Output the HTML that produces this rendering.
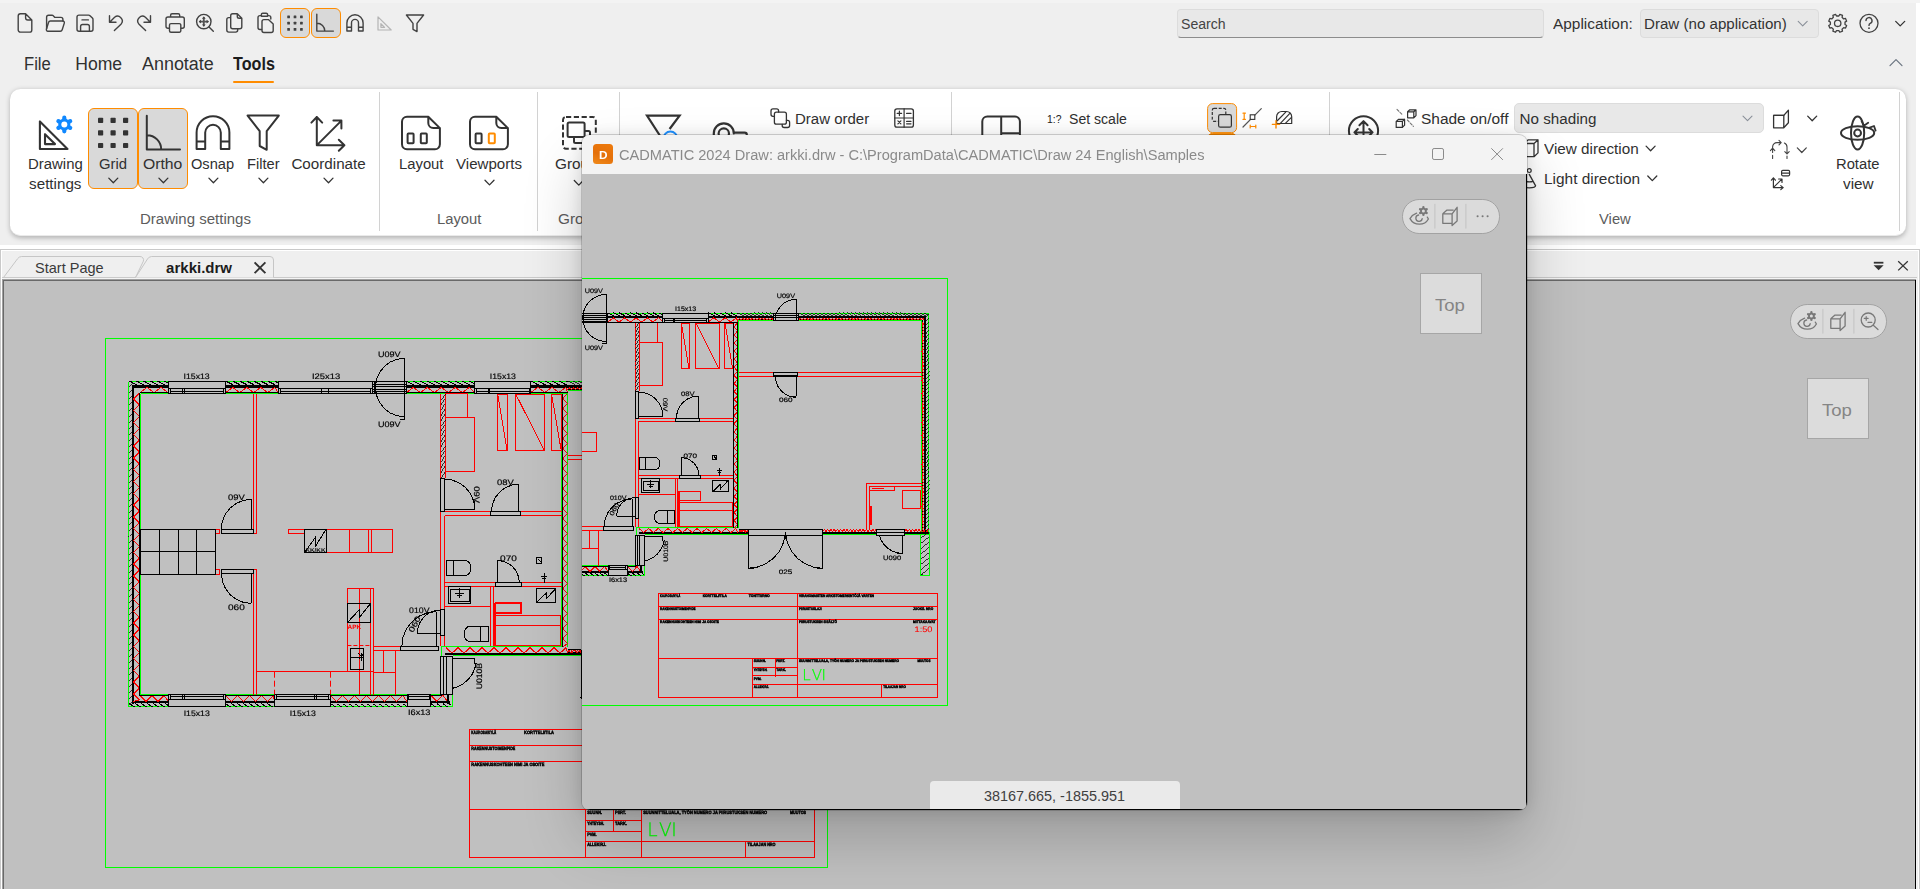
<!DOCTYPE html><html lang="en"><head><meta charset="utf-8"><title>CADMATIC 2024 Draw: arkki.drw</title><style>
*{box-sizing:border-box}
html,body{margin:0;padding:0}
body{width:1920px;height:889px;overflow:hidden;background:#efefef;font-family:"Liberation Sans",sans-serif;position:relative}
#app{position:absolute;left:0;top:0;width:1920px;height:889px;overflow:hidden;background:#efefef}
.a{position:absolute}
.t{position:absolute;white-space:nowrap;transform-origin:0 50%;display:block}
.box{position:absolute;background:#e8e8e8;border:1px solid #dcdcdc;border-radius:5px}
.act{position:absolute;background:#d9d9d9;border:1px solid #ff8c00;border-radius:6px}
.sep{position:absolute;width:1px;background:#d2d2d2;top:92px;height:139px}
.ribbon{position:absolute;left:9.9px;top:88.6px;width:1896px;height:147.5px;background:#fff;border-radius:10.5px;border-bottom:1px solid #eaeaea;box-shadow:0 1.6px 5px rgba(0,0,0,.26)}
svg{position:absolute;left:0;top:0;overflow:hidden}
.cad{will-change:transform}
.canvas{position:absolute;left:4px;top:281px;width:1911px;height:608px;background:#c0c0c0;overflow:hidden}
.fwin{position:absolute;left:582px;top:135px;width:945px;height:675px;border-radius:8px;background:#c0c0c0;box-shadow:0 0 0 1px rgba(0,0,0,.17),0 2px 18px rgba(0,0,0,.13),0 30px 60px rgba(0,0,0,.2);overflow:hidden}
.ftitle{position:absolute;left:0;top:0;width:945px;height:39px;background:#f3f3f3}
.fbody{position:absolute;left:0;top:39px;width:944px;height:635px;background:#c0c0c0;overflow:hidden}
.pill{position:absolute;width:97.4px;height:34.4px;border-radius:17.2px;background:rgba(236,236,236,.62);border:1px solid #a2a2a2}
.topbox{position:absolute;width:61.5px;height:61.3px;background:#dcdcdc;border:1px solid #a6a6a6}
</style></head><body><div id="app"><div class="a" style="left:0;top:0;width:1920px;height:3px;background:#f3f3f3"></div><div class="a" style="left:1916px;top:3px;width:4px;height:246px;background:#fff"></div><div class="a" style="left:0;top:245px;width:1920px;height:4px;background:#fff"></div><div class="act" style="left:280px;top:8px;width:30px;height:30px"></div><div class="act" style="left:310.5px;top:8px;width:30px;height:30px"></div><div class="box" style="left:1176.5px;top:8.5px;width:367px;height:29px;border-bottom-color:#8c8c8c;border-radius:4px"></div><span class="t" style="left:1180.82px;top:14.03px;font-size:15.2px;line-height:19px;color:#444;transform:scaleX(0.9284);">Search</span><span class="t" style="left:1552.62px;top:14.03px;font-size:15.2px;line-height:19px;color:#333;transform:scaleX(1.0157);">Application:</span><div class="box" style="left:1639.5px;top:8.5px;width:179px;height:29px;border-radius:4px"></div><span class="t" style="left:1644.32px;top:14.03px;font-size:15.2px;line-height:19px;color:#333;transform:scaleX(0.9951);">Draw (no application)</span><span class="t" style="left:23.81px;top:52.90px;font-size:17.6px;line-height:22px;color:#303030;transform:scaleX(0.9453);">File</span><span class="t" style="left:75.21px;top:52.90px;font-size:17.6px;line-height:22px;color:#303030;">Home</span><span class="t" style="left:141.81px;top:52.90px;font-size:17.6px;line-height:22px;color:#303030;transform:scaleX(1.0191);">Annotate</span><span class="t" style="left:232.71px;top:52.90px;font-size:17.6px;line-height:22px;color:#1c1c1c;font-weight:bold;transform:scaleX(0.9185);">Tools</span><div class="a" style="left:233px;top:80.6px;width:41px;height:2.6px;border-radius:1.3px;background:#ff8c00"></div><div class="ribbon"></div><div class="sep" style="left:379.0px"></div><div class="sep" style="left:537.0px"></div><div class="sep" style="left:619.0px"></div><div class="sep" style="left:951.0px"></div><div class="sep" style="left:1329.0px"></div><div class="sep" style="left:1899.0px"></div><div class="act" style="left:88.3px;top:108px;width:49.4px;height:81px;border-radius:6px"></div><div class="act" style="left:138.3px;top:108px;width:49.4px;height:81px;border-radius:6px"></div><span class="t" style="left:28.02px;top:153.83px;font-size:15.2px;line-height:19px;color:#303030;transform:scaleX(0.9831);">Drawing</span><span class="t" style="left:29.12px;top:173.83px;font-size:15.2px;line-height:19px;color:#303030;">settings</span><span class="t" style="left:98.72px;top:153.83px;font-size:15.2px;line-height:19px;color:#303030;transform:scaleX(0.9791);">Grid</span><span class="t" style="left:143.22px;top:153.83px;font-size:15.2px;line-height:19px;color:#303030;transform:scaleX(1.0368);">Ortho</span><span class="t" style="left:191.42px;top:153.83px;font-size:15.2px;line-height:19px;color:#303030;transform:scaleX(0.9628);">Osnap</span><span class="t" style="left:246.92px;top:153.83px;font-size:15.2px;line-height:19px;color:#303030;transform:scaleX(0.9656);">Filter</span><span class="t" style="left:291.42px;top:153.83px;font-size:15.2px;line-height:19px;color:#303030;">Coordinate</span><span class="t" style="left:399.02px;top:153.83px;font-size:15.2px;line-height:19px;color:#303030;transform:scaleX(0.9754);">Layout</span><span class="t" style="left:456.02px;top:153.83px;font-size:15.2px;line-height:19px;color:#303030;transform:scaleX(0.9932);">Viewports</span><span class="t" style="left:554.62px;top:153.83px;font-size:15.2px;line-height:19px;color:#303030;transform:scaleX(1.0111);">Group</span><span class="t" style="left:140.12px;top:209.23px;font-size:15.2px;line-height:19px;color:#5c5c5c;transform:scaleX(0.9880);">Drawing settings</span><span class="t" style="left:437.02px;top:209.23px;font-size:15.2px;line-height:19px;color:#5c5c5c;transform:scaleX(0.9732);">Layout</span><span class="t" style="left:557.62px;top:209.23px;font-size:15.2px;line-height:19px;color:#5c5c5c;transform:scaleX(1.0111);">Group</span><span class="t" style="left:795.02px;top:109.03px;font-size:15.2px;line-height:19px;color:#303030;transform:scaleX(0.9872);">Draw order</span><span class="t" style="left:1068.82px;top:109.03px;font-size:15.2px;line-height:19px;color:#303030;transform:scaleX(0.9263);">Set scale</span><span class="t" style="left:1046.55px;top:113.73px;font-size:10px;line-height:12px;color:#222;transform:scaleX(1.0359);">1:?</span><span class="t" style="left:1420.52px;top:109.33px;font-size:15.2px;line-height:19px;color:#303030;transform:scaleX(1.0184);">Shade on/off</span><div class="box" style="left:1514.3px;top:103.2px;width:249.4px;height:29.4px;border-radius:5px"></div><span class="t" style="left:1519.62px;top:109.33px;font-size:15.2px;line-height:19px;color:#303030;">No shading</span><span class="t" style="left:1543.72px;top:139.03px;font-size:15.2px;line-height:19px;color:#303030;transform:scaleX(1.0049);">View direction</span><span class="t" style="left:1543.72px;top:168.93px;font-size:15.2px;line-height:19px;color:#303030;transform:scaleX(1.0156);">Light direction</span><span class="t" style="left:1599.12px;top:208.83px;font-size:15.2px;line-height:19px;color:#5c5c5c;transform:scaleX(0.9738);">View</span><span class="t" style="left:1836.42px;top:154.03px;font-size:15.2px;line-height:19px;color:#303030;transform:scaleX(0.9717);">Rotate</span><span class="t" style="left:1842.82px;top:173.83px;font-size:15.2px;line-height:19px;color:#303030;transform:scaleX(1.0068);">view</span><svg width="1920" height="250" viewBox="0 0 1920 250"><path d="M20.4 13.8h5.2l6.2 6.2v9.9a2.2 2.2 0 0 1-2.2 2.2h-9.2a2.2 2.2 0 0 1-2.2-2.2V16a2.2 2.2 0 0 1 2.2-2.2zM25.6 13.8v4a2.2 2.2 0 0 0 2.2 2.2h4" fill="none" stroke="#424242" stroke-width="1.4" stroke-linecap="round" stroke-linejoin="round" /><path d="M46.6 28.6V17.2a2 2 0 0 1 2-2h3.4a2 2 0 0 1 1.5.7l1.4 1.5h6a2 2 0 0 1 2 2v1.6" fill="none" stroke="#424242" stroke-width="1.4" stroke-linecap="round" stroke-linejoin="round" /><path d="M50.4 21h12.4a1.6 1.6 0 0 1 1.5 2.1l-2.1 6.6a2.2 2.2 0 0 1-2 1.5H47.8a1.5 1.5 0 0 1-1.4-1.9l2.1-6.8a2 2 0 0 1 1.9-1.5z" fill="none" stroke="#424242" stroke-width="1.4" stroke-linecap="round" stroke-linejoin="round" /><path d="M79 15.1h9.6a2 2 0 0 1 1.4.6l2.4 2.4a2 2 0 0 1 .6 1.4v9.7a2 2 0 0 1-2 2H79a2 2 0 0 1-2-2V17.1a2 2 0 0 1 2-2zM82 19.9h6.4M80.6 31.1v-4.6a2 2 0 0 1 2-2h4.8a2 2 0 0 1 2 2v4.6" fill="none" stroke="#424242" stroke-width="1.4" stroke-linecap="round" stroke-linejoin="round" /><path d="M109.5 15.8v6.5h6.5M109.9 21.9l4.7-4.6a4.7 4.7 0 0 1 6.6 6.6l-6.8 6.5" fill="none" stroke="#424242" stroke-width="1.4" stroke-linecap="round" stroke-linejoin="round" /><path d="M150.5 15.8v6.5h-6.5M150.1 21.9l-4.7-4.6a4.7 4.7 0 0 0-6.6 6.6l6.8 6.5" fill="none" stroke="#424242" stroke-width="1.4" stroke-linecap="round" stroke-linejoin="round" /><path d="M170.6 17v-1.8a1.5 1.5 0 0 1 1.5-1.5h6.1a1.5 1.5 0 0 1 1.5 1.5V17M169.6 28.3h-1.6a2 2 0 0 1-2-2V19a2 2 0 0 1 2-2h14.3a2 2 0 0 1 2 2v7.3a2 2 0 0 1-2 2h-1.6M171 23.6h8.3a1.5 1.5 0 0 1 1.5 1.5v5.7a1.5 1.5 0 0 1-1.5 1.5H171a1.5 1.5 0 0 1-1.5-1.5v-5.7a1.5 1.5 0 0 1 1.5-1.5z" fill="none" stroke="#424242" stroke-width="1.4" stroke-linecap="round" stroke-linejoin="round" /><circle cx="203.8" cy="21.6" r="7.2" fill="none" stroke="#424242" stroke-width="1.4"/><path d="M209 26.9l4.3 4.3" fill="none" stroke="#424242" stroke-width="1.4" stroke-linecap="round" stroke-linejoin="round" /><path d="M203.8 17.6v8M199.8 21.6h8" fill="none" stroke="#555" stroke-width="1.8" stroke-linecap="round" stroke-linejoin="round" /><path d="M203.8 16.6l1.9 2.2h-3.8zM203.8 26.6l1.9-2.2h-3.8zM198.8 21.6l2.2-1.9v3.8zM208.8 21.6l-2.2-1.9v3.8z" fill="#444"/><path d="M229.8 17.6h-1a2 2 0 0 0-2 2v10.5a2 2 0 0 0 2 2h6.9a2 2 0 0 0 2-2v-1.2" fill="none" stroke="#424242" stroke-width="1.4" stroke-linecap="round" stroke-linejoin="round" /><path d="M232.7 13.8h4.6l4.5 4.5v8.4a2 2 0 0 1-2 2h-7.1a2 2 0 0 1-2-2V15.8a2 2 0 0 1 2-2zM237.3 13.8v2.7a1.8 1.8 0 0 0 1.8 1.8h2.7" fill="none" stroke="#424242" stroke-width="1.4" stroke-linecap="round" stroke-linejoin="round" /><path d="M261.2 15.6h-1.2a2 2 0 0 0-2 2v9.9a2 2 0 0 0 2 2h1.6M267.6 15.6h1.2a2 2 0 0 1 2 2v1.4M261.4 16.2v-1.6a1.4 1.4 0 0 1 1.4-1.4h3.4a1.4 1.4 0 0 1 1.4 1.4v1.6z" fill="none" stroke="#424242" stroke-width="1.4" stroke-linecap="round" stroke-linejoin="round" /><path d="M264 19.6h4.4l4.8 4.4v6.5a2 2 0 0 1-2 2H264a2 2 0 0 1-2-2v-8.9a2 2 0 0 1 2-2z" fill="none" stroke="#424242" stroke-width="1.4" stroke-linecap="round" stroke-linejoin="round" /><rect x="287.25" y="15.55" width="2.7" height="2.7" rx="0.5" fill="#424242"/><rect x="287.25" y="21.75" width="2.7" height="2.7" rx="0.5" fill="#424242"/><rect x="287.25" y="27.95" width="2.7" height="2.7" rx="0.5" fill="#424242"/><rect x="293.65" y="15.55" width="2.7" height="2.7" rx="0.5" fill="#424242"/><rect x="293.65" y="21.75" width="2.7" height="2.7" rx="0.5" fill="#424242"/><rect x="293.65" y="27.95" width="2.7" height="2.7" rx="0.5" fill="#424242"/><rect x="300.05" y="15.55" width="2.7" height="2.7" rx="0.5" fill="#424242"/><rect x="300.05" y="21.75" width="2.7" height="2.7" rx="0.5" fill="#424242"/><rect x="300.05" y="27.95" width="2.7" height="2.7" rx="0.5" fill="#424242"/><path d="M316.8 14.3V31.1h16.6M317 23.2a7.8 7.8 0 0 1 7.8 7.8" fill="none" stroke="#424242" stroke-width="1.4" stroke-linecap="round" stroke-linejoin="round" /><path d="M346.9 31V22.9a8.1 8.1 0 0 1 16.2 0V31h-4.6V22.9a3.5 3.5 0 0 0-7 0V31zM346.9 27.3h4.6M358.5 27.3h4.6" fill="none" stroke="#424242" stroke-width="1.4" stroke-linecap="round" stroke-linejoin="round" /><path d="M378 16.8V30h13.2zM380.9 23.6v3.7h3.7z" fill="none" stroke="#b4b4b4" stroke-width="1.2" stroke-linecap="round" stroke-linejoin="round" /><path d="M406.4 15h17.2l-6.6 8.4v8.2l-4-2.3v-5.9z" fill="none" stroke="#424242" stroke-width="1.4" stroke-linecap="round" stroke-linejoin="round" /><path d="M1846.65 25.45L1845.54 28.11L1843.69 27.65L1842.05 29.29L1842.51 31.14L1839.85 32.25L1838.86 30.61L1836.54 30.61L1835.55 32.25L1832.89 31.14L1833.35 29.29L1831.71 27.65L1829.86 28.11L1828.75 25.45L1830.39 24.46L1830.39 22.14L1828.75 21.15L1829.86 18.49L1831.71 18.95L1833.35 17.31L1832.89 15.46L1835.55 14.35L1836.54 15.99L1838.86 15.99L1839.85 14.35L1842.51 15.46L1842.05 17.31L1843.69 18.95L1845.54 18.49L1846.65 21.15L1845.01 22.14L1845.01 24.46Z" fill="none" stroke="#424242" stroke-width="1.3" stroke-linejoin="round"/><circle cx="1837.7" cy="23.3" r="3.2" fill="none" stroke="#424242" stroke-width="1.3"/><circle cx="1869" cy="23.3" r="9" fill="none" stroke="#424242" stroke-width="1.3"/><path d="M1866 20.6a3 3 0 1 1 4.3 2.7c-1 .5-1.3 1.1-1.3 2.1" fill="none" stroke="#424242" stroke-width="1.4" stroke-linecap="round" stroke-linejoin="round" /><circle cx="1869" cy="28.2" r="0.9" fill="#424242"/><path d="M1895.70 21.35L1900.20 25.85L1904.70 21.35" fill="none" stroke="#333" stroke-width="1.3" stroke-linecap="round" stroke-linejoin="round"/><path d="M1798.20 21.35L1802.70 25.85L1807.20 21.35" fill="none" stroke="#8a9099" stroke-width="1.1" stroke-linecap="round" stroke-linejoin="round"/><path d="M1890.00 65.60L1896.00 59.60L1902.00 65.60" fill="none" stroke="#6a7480" stroke-width="1.2" stroke-linecap="round" stroke-linejoin="round"/><path d="M39.9 121.4V149h27.6zM45 134.2v9.9h10z" fill="none" stroke="#333" stroke-width="2.1" stroke-linecap="round" stroke-linejoin="round" /><path d="M64.30 124.50L64.30 117.70M64.30 124.50L58.41 121.10M64.30 124.50L58.41 127.90M64.30 124.50L64.30 131.30M64.30 124.50L70.19 127.90M64.30 124.50L70.19 121.10" stroke="#1088ff" stroke-width="4.2" stroke-linecap="round" fill="none"/><circle cx="64.3" cy="124.5" r="6.0" fill="#1088ff"/><circle cx="64.3" cy="124.5" r="3.0" fill="#fff"/><rect x="98.00" y="117.80" width="5.2" height="5.2" rx="0.8" fill="#333"/><rect x="98.00" y="130.30" width="5.2" height="5.2" rx="0.8" fill="#333"/><rect x="98.00" y="142.90" width="5.2" height="5.2" rx="0.8" fill="#333"/><rect x="110.50" y="117.80" width="5.2" height="5.2" rx="0.8" fill="#333"/><rect x="110.50" y="130.30" width="5.2" height="5.2" rx="0.8" fill="#333"/><rect x="110.50" y="142.90" width="5.2" height="5.2" rx="0.8" fill="#333"/><rect x="123.00" y="117.80" width="5.2" height="5.2" rx="0.8" fill="#333"/><rect x="123.00" y="130.30" width="5.2" height="5.2" rx="0.8" fill="#333"/><rect x="123.00" y="142.90" width="5.2" height="5.2" rx="0.8" fill="#333"/><path d="M146.8 115.8V149.4H180M147 135.2a14.2 14.2 0 0 1 14.2 14.2" fill="none" stroke="#333" stroke-width="2.0" stroke-linecap="round" stroke-linejoin="round" /><path d="M196.6 149V132.6a16.4 16.4 0 0 1 32.8 0V149h-8.6V132.6a7.8 7.8 0 0 0-15.6 0V149zM196.6 141.6h8.6M220.8 141.6h8.6" fill="none" stroke="#333" stroke-width="2.0" stroke-linecap="round" stroke-linejoin="round" /><path d="M247.6 115.6h31.2l-12.1 15.6v18.6l-7-3.8v-14.8z" fill="none" stroke="#333" stroke-width="2.0" stroke-linecap="round" stroke-linejoin="round" /><path d="M316.8 117v28.3h27.6M311.4 122.6l5.4-5.6 5.4 5.6M338.8 139.8l5.6 5.5-5.6 5.5M317.2 144.9l24-24M333.4 120.6h8v8" fill="none" stroke="#333" stroke-width="2.0" stroke-linecap="round" stroke-linejoin="round" /><path d="M407 116.8h21.3l11.6 11.3v16.2a5 5 0 0 1-5 5h-27.9a5 5 0 0 1-5-5V121.8a5 5 0 0 1 5-5zM428.3 116.8v6.3a5 5 0 0 0 5 5h6.6" fill="none" stroke="#333" stroke-width="2.0" stroke-linecap="round" stroke-linejoin="round" /><rect x="407.6" y="133.6" width="6" height="9.6" rx="0.8" fill="none" stroke="#333" stroke-width="2.0"/><rect x="420.8" y="133.6" width="6" height="9.6" rx="0.8" fill="none" stroke="#333" stroke-width="2.0"/><path d="M475 116.8h21.3l11.6 11.3v16.2a5 5 0 0 1-5 5h-27.9a5 5 0 0 1-5-5V121.8a5 5 0 0 1 5-5zM496.3 116.8v6.3a5 5 0 0 0 5 5h6.6" fill="none" stroke="#333" stroke-width="2.0" stroke-linecap="round" stroke-linejoin="round" /><rect x="475.6" y="133.6" width="6" height="9.6" rx="0.8" fill="none" stroke="#333" stroke-width="2.0"/><rect x="488.8" y="133.6" width="6" height="9.6" rx="0.8" fill="none" stroke="#ff8c00" stroke-width="2.0"/><rect x="563" y="116.9" width="32.8" height="31.8" rx="3" fill="none" stroke="#333" stroke-width="2.0" stroke-dasharray="5.2 2.6"/><rect x="574" y="131" width="16" height="12" rx="1.5" fill="none" stroke="#333" stroke-width="2.0"/><rect x="567.6" y="122.6" width="17" height="14.4" rx="1.5" fill="#fff" stroke="#333" stroke-width="2.0"/><path d="M660.8 137L647 115.6h32.6L669.6 129" fill="none" stroke="#333" stroke-width="2.2" stroke-linecap="butt" stroke-linejoin="miter" /><circle cx="670.4" cy="138.6" r="7" fill="none" stroke="#1e90ff" stroke-width="2"/><path d="M713.8 138V133.4a10 10 0 0 1 20 0M733.6 132.6h11a2.2 2.2 0 0 1 2.2 2.2V138" fill="none" stroke="#333" stroke-width="2.2" stroke-linecap="round" stroke-linejoin="round" /><circle cx="723.8" cy="133.6" r="5.2" fill="none" stroke="#333" stroke-width="2.2"/><path d="M774.2 116.3h-1.2a2 2 0 0 1-2-2v-3.4a2 2 0 0 1 2-2h3.6a2 2 0 0 1 2 2v1.2" fill="none" stroke="#333" stroke-width="1.3" stroke-linecap="round" stroke-linejoin="round" /><path d="M786.4 120.3h1.2a2 2 0 0 1 2 2v3.2a2 2 0 0 1-2 2h-3.4a2 2 0 0 1-2-2v-1" fill="none" stroke="#333" stroke-width="1.3" stroke-linecap="round" stroke-linejoin="round" /><rect x="774.4" y="112.2" width="12" height="12" rx="2" fill="none" stroke="#333" stroke-width="1.3"/><rect x="894.8" y="108.8" width="18.6" height="18.4" rx="2.2" fill="none" stroke="#333" stroke-width="1.3"/><path d="M904.1 108.8v18.4M894.8 118h18.6M897.2 113.4h4.4M899.4 111.2v4.4M906.6 113.4h4.4M897.9 120.9l3 3M900.9 120.9l-3 3M906.6 121.4h4.4M906.6 123.8h4.4" fill="none" stroke="#333" stroke-width="1.2" stroke-linecap="round" stroke-linejoin="round" /><path d="M982.3 136V121.6a5 5 0 0 1 5-5h27.6a5 5 0 0 1 5 5V136M1001.2 116.6V136M1001.2 133.2h18.7" fill="none" stroke="#333" stroke-width="2.0" stroke-linecap="round" stroke-linejoin="round" /><rect x="1207.6" y="103.6" width="29" height="29" rx="5" fill="#d9d9d9" stroke="#ff8c00" stroke-width="1"/><rect x="1207.6" y="133.4" width="29" height="10" rx="5" fill="#ff8c00" stroke="#ff8c00" stroke-width="1"/><rect x="1212.3" y="108.4" width="13.5" height="13" rx="1.8" fill="none" stroke="#333" stroke-width="1.2" stroke-dasharray="3 1.6"/><rect x="1218.6" y="114.6" width="12.8" height="12.6" rx="1.8" fill="#d9d9d9" stroke="#333" stroke-width="1.2"/><path d="M1243 127l18.3-18.3" fill="none" stroke="#555" stroke-width="1.2" stroke-linecap="round" stroke-linejoin="round" /><rect x="1250.2" y="114.8" width="4.6" height="4.6" fill="#fff" stroke="#333" stroke-width="1.1"/><path d="M1243 113.2h2.4M1243 119.4h2.4M1244.2 113.2v6.2M1250.2 125v3M1255.8 125v3M1250.2 126.5h5.6" fill="none" stroke="#ff8c00" stroke-width="1.2" stroke-linecap="round" stroke-linejoin="round" /><path d="M1276.6 123.5v-6.8a5.2 5.2 0 0 1 5.2-5.2h4.7a5.2 5.2 0 0 1 5.2 5.2v6.8z" fill="none" stroke="#333" stroke-width="1.2" stroke-linecap="round" stroke-linejoin="round" /><path d="M1277.5 120.5l8.2-8.4M1280.6 123.2l9-9.6M1285.6 123.2l5.6-5.6" fill="none" stroke="#333" stroke-width="1.2" stroke-linecap="round" stroke-linejoin="round" /><path d="M1272.4 124.4h7.2M1276 120.8v7.2" fill="none" stroke="#ff8c00" stroke-width="1.4" stroke-linecap="round" stroke-linejoin="round" /><circle cx="1363.5" cy="130.8" r="14.6" fill="none" stroke="#333" stroke-width="2"/><path d="M1363.5 121.4v14M1359.4 125.2l4.1-4.1 4.1 4.1M1354.6 132.4h17.8M1357.8 129l-3.4 3.4 3.4 3.4M1369.2 129l3.4 3.4-3.4 3.4" fill="none" stroke="#333" stroke-width="2.0" stroke-linecap="round" stroke-linejoin="round" /><path d="M1407.6 111.8l2.2-2h6.2v5.8l-2.2 2.2h-6.2zM1407.6 111.8h6.2v6M1413.8 111.8l2.2-2" fill="none" stroke="#333" stroke-width="1.2" stroke-linecap="round" stroke-linejoin="round" /><path d="M1396.2 121.4l2.2-2h6.2v5.8l-2.2 2.2h-6.2zM1396.2 121.4h6.2v6M1402.4 121.4l2.2-2" fill="none" stroke="#333" stroke-width="1.2" stroke-linecap="round" stroke-linejoin="round" /><path d="M1397 109.4l5.6 5.6M1407.4 120l6 6.4" fill="none" stroke="#777" stroke-width="1.1" stroke-linecap="round" stroke-linejoin="round" stroke-dasharray="2.6 1.6"/><path d="M1524 143.5l4-3.6h10v13l-4 3.8h-10zM1524 143.5h10v13.2M1534 143.5l4-3.6" fill="none" stroke="#333" stroke-width="1.3" stroke-linecap="round" stroke-linejoin="round" /><path d="M1529.3 174.4l6.2 11.2M1523 185.6a6.3 2.3 0 0 0 12.6 0M1525.6 181.4a6 2 0 0 0 7.6 0" fill="none" stroke="#333" stroke-width="1.3" stroke-linecap="round" stroke-linejoin="round" /><circle cx="1529.3" cy="170.6" r="1.9" fill="none" stroke="#333" stroke-width="1.2"/><path d="M1773.6 115.4l0 12.4h10.2v-12.4zM1783.8 115.4l4.6-5.2v12.6l-4.6 5" fill="none" stroke="#333" stroke-width="1.3" stroke-linecap="round" stroke-linejoin="round" /><path d="M1773.6 115.4h10.2" fill="none" stroke="#333" stroke-width="1.3" stroke-linecap="round" stroke-linejoin="round" /><path d="M1772.6 158.4v-3M1772.6 152.4v-5.4a4.4 4.4 0 0 1 4.4-4.4h3.4M1779 140.4l2.2 2.2-2.2 2.2M1770.4 150.6l2.2-2.4 2.2 2.4" fill="none" stroke="#444" stroke-width="1.1" stroke-linecap="round" stroke-linejoin="round" /><path d="M1787 158.4v-2.4M1787 153.6v-6.6a4.4 4.4 0 0 0-2.6-4M1784.8 151.6l2.2 2.4 2.2-2.4" fill="none" stroke="#444" stroke-width="1.1" stroke-linecap="round" stroke-linejoin="round" /><path d="M1773.4 178v9.6h9.6M1771.4 180.2l2-2.4 2 2.4M1780.8 185.6l2.4 2-2.4 2M1773.8 187.2l8-8M1778.6 179h3.4v3.4" fill="none" stroke="#333" stroke-width="1.2" stroke-linecap="round" stroke-linejoin="round" /><rect x="1781.6" y="170.4" width="8" height="5.4" rx="1.2" fill="none" stroke="#333" stroke-width="1.2"/><path d="M1781.6 173.1h8" fill="none" stroke="#333" stroke-width="1.1" stroke-linecap="round" stroke-linejoin="round" /><ellipse cx="1857.6" cy="133" rx="6.6" ry="16.6" fill="none" stroke="#333" stroke-width="2"/><ellipse cx="1857.6" cy="133" rx="16.6" ry="6.8" fill="none" stroke="#333" stroke-width="2"/><circle cx="1857.6" cy="133" r="3.4" fill="#fff" stroke="#333" stroke-width="2"/><path d="M1861.6 121.4l2.6 4.2 4-2.8M1869.6 127.6l4.4-1.6 1.6 4.6" fill="none" stroke="#333" stroke-width="1.8" stroke-linecap="round" stroke-linejoin="round" /><path d="M108.80 178.10L113.30 182.70L117.80 178.10" fill="none" stroke="#333" stroke-width="1.3" stroke-linecap="round" stroke-linejoin="round"/><path d="M158.90 178.10L163.40 182.70L167.90 178.10" fill="none" stroke="#333" stroke-width="1.3" stroke-linecap="round" stroke-linejoin="round"/><path d="M208.90 178.10L213.40 182.70L217.90 178.10" fill="none" stroke="#333" stroke-width="1.3" stroke-linecap="round" stroke-linejoin="round"/><path d="M258.90 178.10L263.40 182.70L267.90 178.10" fill="none" stroke="#333" stroke-width="1.3" stroke-linecap="round" stroke-linejoin="round"/><path d="M324.00 178.10L328.50 182.70L333.00 178.10" fill="none" stroke="#333" stroke-width="1.3" stroke-linecap="round" stroke-linejoin="round"/><path d="M485.00 180.30L489.50 184.90L494.00 180.30" fill="none" stroke="#333" stroke-width="1.3" stroke-linecap="round" stroke-linejoin="round"/><path d="M574.30 180.50L578.80 185.10L583.30 180.50" fill="none" stroke="#333" stroke-width="1.3" stroke-linecap="round" stroke-linejoin="round"/><path d="M1743.00 116.10L1747.50 120.70L1752.00 116.10" fill="none" stroke="#8a9099" stroke-width="1.1" stroke-linecap="round" stroke-linejoin="round"/><path d="M1807.70 116.10L1812.20 120.70L1816.70 116.10" fill="none" stroke="#333" stroke-width="1.3" stroke-linecap="round" stroke-linejoin="round"/><path d="M1797.30 147.90L1801.80 152.50L1806.30 147.90" fill="none" stroke="#444" stroke-width="1.2" stroke-linecap="round" stroke-linejoin="round"/><path d="M1646.10 146.10L1650.60 150.70L1655.10 146.10" fill="none" stroke="#333" stroke-width="1.3" stroke-linecap="round" stroke-linejoin="round"/><path d="M1647.80 176.00L1652.30 180.60L1656.80 176.00" fill="none" stroke="#333" stroke-width="1.3" stroke-linecap="round" stroke-linejoin="round"/></svg><div class="a" style="left:0;top:249px;width:1920px;height:640px;background:#efefef;border-left:1px solid #c9c9c9;border-right:1px solid #c9c9c9;border-top:1px solid #c9c9c9"></div><div class="a" style="left:1px;top:250px;width:1918px;height:639px;border-left:1px solid #fff;border-right:1px solid #fff;border-top:1px solid #fff"></div><div class="a" style="left:2px;top:277px;width:1915px;height:1px;background:#cacaca"></div><div class="a" style="left:2px;top:278px;width:1915px;height:1px;background:#f4f4f4"></div><div class="a" style="left:2px;top:279px;width:1914px;height:610px;background:#a0a0a0"></div><div class="a" style="left:3px;top:280px;width:1913px;height:609px;background:#696969"></div><div class="a" style="left:1915px;top:280px;width:1px;height:609px;background:#000"></div><div class="a" style="left:1916px;top:279px;width:1px;height:610px;background:#f4f4f4"></div><svg width="1920" height="280" viewBox="0 0 1920 280" style="top:0"><path d="M3.5 277.5L17.5 258.8a5 5 0 0 1 4-2.3H140a3.5 3.5 0 0 1 3.4 4.6L135.5 277.5" fill="none" stroke="#c6c6c6" stroke-width="1"/><path d="M135.5 277.5L147.5 259a5 5 0 0 1 4-2.5H270a3.5 3.5 0 0 1 3.5 3.5V277.5" fill="#efefef" stroke="#c6c6c6" stroke-width="1"/><path d="M254.6 262.4l10.8 10.8M265.4 262.4l-10.8 10.8" stroke="#333" stroke-width="1.9" fill="none"/><path d="M1873.8 262.7h9.6" stroke="#333" stroke-width="1.8" fill="none"/><path d="M1873.6 265.2h10l-5 5z" fill="#333"/><path d="M1898.2 261.2l9.6 9.2M1907.8 261.2l-9.6 9.2" stroke="#333" stroke-width="1.3" fill="none"/></svg><span class="t" style="left:34.53px;top:258.10px;font-size:15.0px;line-height:19px;color:#3a3a3a;transform:scaleX(0.9679);">Start Page</span><span class="t" style="left:166.12px;top:258.10px;font-size:15.0px;line-height:19px;color:#1c1c1c;font-weight:bold;">arkki.drw</span><div class="canvas"><svg class="cad" width="1911" height="608" viewBox="4 281 1911 608"><g shape-rendering="crispEdges"><path d="M105.5 338.5H827.5V867.5H105.5ZM128.5 381.5L168.4 381.5M140.5 393.5L168.4 393.5M225.7 381.5L278.3 381.5M225.7 393.5L278.3 393.5M406.4 381.5L474.6 381.5M406.4 393.5L474.6 393.5M530.9 381.5L567.5 381.5M530.9 393.5L567.5 393.5M128.5 381.5L128.5 706.5M140.5 393.5L140.5 694.5M128.5 706.5L168.4 706.5M140.5 694.5L168.4 694.5M225.5 706.5L274.5 706.5M225.5 694.5L274.5 694.5M330.6 706.5L407.1 706.5M330.6 694.5L407.1 694.5M430.8 706.5L452.5 706.5M430.8 694.5L440.5 694.5M452.5 694.5L452.5 706.5M561.5 393.5L561.5 647.0M567.5 390.5L567.5 647.0M441.0 646.5L561.5 646.5M452.5 655.5L581.0 655.5M441.5 646.5L441.5 656.0M567.5 381.5L611.2 381.5M567.5 390.5L611.2 390.5M642.8 381.5L803.8 381.5M642.8 390.5L794.8 390.5M803.5 381.5L803.5 652.6M794.5 390.5L794.5 652.6M568.4 655.5L580.1 655.5M672.8 655.5L739.1 655.5M773.9 655.5L803.8 655.5M793.5 652.5H804.5V706.5H793.5Z" stroke="#00ff00" stroke-width="1" fill="none"/><path d="M567.5 389.5L611.2 389.5M642.8 389.5L795.8 389.5M795.5 389.5L795.5 652.6" stroke="#010101" stroke-width="1" fill="none"/><path d="M133.0 384.5L133.0 703.5M131.5 702.0L168.4 702.0M225.5 702.0L274.5 702.0M330.6 702.0L407.1 702.0M430.8 702.0L449.5 702.0M445.0 654.0L581.0 654.0M568.4 653.0L580.1 653.0M672.8 653.0L739.1 653.0M773.9 653.0L803.8 653.0" stroke="#010101" stroke-width="2" fill="none"/><path d="M132.0 386.5L168.4 386.5M225.7 386.5L278.3 386.5M406.4 386.5L474.6 386.5M530.9 386.5L567.5 386.5M567.5 386.5L611.2 386.5M642.8 386.5L800.3 386.5M798.5 385.0L798.5 652.6" stroke="#010101" stroke-width="3" fill="none"/><path d="M140.0 392.6L147.0 387.3L154.0 392.6L161.0 387.3L168.0 392.6L168.4 387.3M225.7 392.6L232.7 387.3L239.7 392.6L246.7 387.3L253.7 392.6L260.7 387.3L267.7 392.6L274.7 387.3L278.3 392.6M406.4 392.6L413.4 387.3L420.4 392.6L427.4 387.3L434.4 392.6L441.4 387.3L448.4 392.6L455.4 387.3L462.4 392.6L469.4 387.3L474.6 392.6M530.9 392.6L537.9 387.3L544.9 392.6L551.9 387.3L558.9 392.6L565.9 387.3L567.5 392.6M139.5 393.0L133.5 398.9L139.5 404.8L133.5 410.7L139.5 416.6L133.5 422.5L139.5 428.4L133.5 434.3L139.5 440.2L133.5 446.1L139.5 452.0L133.5 457.9L139.5 463.8L133.5 469.7L139.5 475.6L133.5 481.5L139.5 487.4L133.5 493.3L139.5 499.2L133.5 505.1L139.5 511.0L133.5 516.9L139.5 522.8L133.5 528.7L139.5 534.6L133.5 540.5L139.5 546.4L133.5 552.3L139.5 558.2L133.5 564.1L139.5 570.0L133.5 575.9L139.5 581.8L133.5 587.7L139.5 593.6L133.5 599.5L139.5 605.4L133.5 611.3L139.5 617.2L133.5 623.1L139.5 629.0L133.5 634.9L139.5 640.8L133.5 646.7L139.5 652.6L133.5 658.5L139.5 664.4L133.5 670.3L139.5 676.2L133.5 682.1L139.5 688.0L133.5 693.9L139.5 699.8L133.5 701.5M140.0 695.4L146.0 701.5L152.0 695.4L158.0 701.5L164.0 695.4L168.4 701.5M225.5 695.4L231.5 701.5L237.5 695.4L243.5 701.5L249.5 695.4L255.5 701.5L261.5 695.4L267.5 701.5L273.5 695.4L274.5 701.5M330.6 695.4L336.6 701.5L342.6 695.4L348.6 701.5L354.6 695.4L360.6 701.5L366.6 695.4L372.6 701.5L378.6 695.4L384.6 701.5L390.6 695.4L396.6 701.5L402.6 695.4L407.1 701.5M430.8 695.4L436.8 701.5L442.8 695.4L447.5 701.5M567.4 393.5L562.9 398.5L567.4 403.5L562.9 408.5L567.4 413.5L562.9 418.5L567.4 423.5L562.9 428.5L567.4 433.5L562.9 438.5L567.4 443.5L562.9 448.5L567.4 453.5L562.9 458.5L567.4 463.5L562.9 468.5L567.4 473.5L562.9 478.5L567.4 483.5L562.9 488.5L567.4 493.5L562.9 498.5L567.4 503.5L562.9 508.5L567.4 513.5L562.9 518.5L567.4 523.5L562.9 528.5L567.4 533.5L562.9 538.5L567.4 543.5L562.9 548.5L567.4 553.5L562.9 558.5L567.4 563.5L562.9 568.5L567.4 573.5L562.9 578.5L567.4 583.5L562.9 588.5L567.4 593.5L562.9 598.5L567.4 603.5L562.9 608.5L567.4 613.5L562.9 618.5L567.4 623.5L562.9 628.5L567.4 633.5L562.9 638.5L567.4 643.5L562.9 647.0M446.0 647.6L452.0 653.2L458.0 647.6L464.0 653.2L470.0 647.6L476.0 653.2L482.0 647.6L488.0 653.2L494.0 647.6L500.0 653.2L506.0 647.6L512.0 653.2L518.0 647.6L524.0 653.2L530.0 647.6L536.0 653.2L542.0 647.6L548.0 653.2L554.0 647.6L560.0 653.2L566.0 647.6L567.5 653.2M568.0 650.4L571.0 652.6L574.0 650.4L577.0 652.6L580.0 650.4L581.0 652.6M215.5 529.5H219.5V533.5H215.5ZM215.5 569.5H219.5V574.5H215.5ZM253.5 393.5L253.5 529.5M256.5 393.5L256.5 533.5M253.5 533.5L256.5 533.5M253.5 573.5L253.5 694.5M256.5 569.5L256.5 694.5M253.5 569.5L256.5 569.5M288.5 529.5H304.5V533.5H288.5ZM326.5 529.5H392.5V552.5H326.5ZM349.5 529.5L349.5 552.6M368.5 529.5L368.5 552.6M371.5 529.5L371.5 552.6M347.5 588.5H373.5V671.5H347.5ZM359.5 588.3L359.5 671.7M370.5 588.3L370.5 671.7M347.4 603.5L370.9 603.5M256.5 671.5L347.4 671.5M359.5 671.7L359.5 694.5M370.5 671.7L370.5 694.5M373.5 671.7L373.5 694.5M373.5 646.5L400.8 646.5M373.5 650.5L400.8 650.5M383.5 650.2L383.5 672.5M395.5 650.2L395.5 694.5M373.5 672.5L395.0 672.5M440.5 511.5L440.5 609.6M444.5 515.5L444.5 609.6M440.5 635.3L440.5 646.3M444.5 635.3L444.5 646.3M440.5 393.5L440.5 477.6M445.5 393.5L445.5 477.6M445.5 393.5H467.5V417.5H445.5ZM445.5 417.5H474.5V471.5H445.5ZM497.5 394.5H507.5V450.5H497.5ZM497.8 394.3L507.1 450.5M515.5 394.5H544.5V450.5H515.5ZM515.8 394.3L544.4 450.5M551.5 394.5H561.5V450.5H551.5ZM551.6 394.3L561.2 450.5M444.5 511.5L490.9 511.5M444.5 515.5L490.9 515.5M520.6 511.5L561.8 511.5M520.6 515.5L561.8 515.5M444.5 582.5L495.3 582.5M444.5 586.5L495.3 586.5M521.3 582.5L561.8 582.5M521.3 586.5L561.8 586.5M444.5 606.5L490.3 606.5M490.5 586.5L490.5 646.3M493.5 586.5L493.5 646.3M494.5 615.5H560.5V625.5H494.5ZM494.5 625.5H560.5V645.5H494.5ZM567.5 389.5L569.5 388.1L571.5 389.5L573.5 388.1L575.5 389.5L577.5 388.1L579.5 389.5L581.5 388.1L583.5 389.5L585.5 388.1L587.5 389.5L589.5 388.1L591.5 389.5L593.5 388.1L595.5 389.5L597.5 388.1L599.5 389.5L601.5 388.1L603.5 389.5L605.5 388.1L607.5 389.5L609.5 388.1L611.2 389.5M642.8 389.5L644.8 388.1L646.8 389.5L648.8 388.1L650.8 389.5L652.8 388.1L654.8 389.5L656.8 388.1L658.8 389.5L660.8 388.1L662.8 389.5L664.8 388.1L666.8 389.5L668.8 388.1L670.8 389.5L672.8 388.1L674.8 389.5L676.8 388.1L678.8 389.5L680.8 388.1L682.8 389.5L684.8 388.1L686.8 389.5L688.8 388.1L690.8 389.5L692.8 388.1L694.8 389.5L696.8 388.1L698.8 389.5L700.8 388.1L702.8 389.5L704.8 388.1L706.8 389.5L708.8 388.1L710.8 389.5L712.8 388.1L714.8 389.5L716.8 388.1L718.8 389.5L720.8 388.1L722.8 389.5L724.8 388.1L726.8 389.5L728.8 388.1L730.8 389.5L732.8 388.1L734.8 389.5L736.8 388.1L738.8 389.5L740.8 388.1L742.8 389.5L744.8 388.1L746.8 389.5L748.8 388.1L750.8 389.5L752.8 388.1L754.8 389.5L756.8 388.1L758.8 389.5L760.8 388.1L762.8 389.5L764.8 388.1L766.8 389.5L768.8 388.1L770.8 389.5L772.8 388.1L774.8 389.5L776.8 388.1L778.8 389.5L780.8 388.1L782.8 389.5L784.8 388.1L786.8 389.5L788.8 388.1L790.8 389.5L792.8 388.1L794.8 389.5L796.8 388.1L797.2 389.5M795.8 393.0L797.2 395.0L795.8 397.0L797.2 399.0L795.8 401.0L797.2 403.0L795.8 405.0L797.2 407.0L795.8 409.0L797.2 411.0L795.8 413.0L797.2 415.0L795.8 417.0L797.2 419.0L795.8 421.0L797.2 423.0L795.8 425.0L797.2 427.0L795.8 429.0L797.2 431.0L795.8 433.0L797.2 435.0L795.8 437.0L797.2 439.0L795.8 441.0L797.2 443.0L795.8 445.0L797.2 447.0L795.8 449.0L797.2 451.0L795.8 453.0L797.2 455.0L795.8 457.0L797.2 459.0L795.8 461.0L797.2 463.0L795.8 465.0L797.2 467.0L795.8 469.0L797.2 471.0L795.8 473.0L797.2 475.0L795.8 477.0L797.2 479.0L795.8 481.0L797.2 483.0L795.8 485.0L797.2 487.0L795.8 489.0L797.2 491.0L795.8 493.0L797.2 495.0L795.8 497.0L797.2 499.0L795.8 501.0L797.2 503.0L795.8 505.0L797.2 507.0L795.8 509.0L797.2 511.0L795.8 513.0L797.2 515.0L795.8 517.0L797.2 519.0L795.8 521.0L797.2 523.0L795.8 525.0L797.2 527.0L795.8 529.0L797.2 531.0L795.8 533.0L797.2 535.0L795.8 537.0L797.2 539.0L795.8 541.0L797.2 543.0L795.8 545.0L797.2 547.0L795.8 549.0L797.2 551.0L795.8 553.0L797.2 555.0L795.8 557.0L797.2 559.0L795.8 561.0L797.2 563.0L795.8 565.0L797.2 567.0L795.8 569.0L797.2 571.0L795.8 573.0L797.2 575.0L795.8 577.0L797.2 579.0L795.8 581.0L797.2 583.0L795.8 585.0L797.2 587.0L795.8 589.0L797.2 591.0L795.8 593.0L797.2 595.0L795.8 597.0L797.2 599.0L795.8 601.0L797.2 603.0L795.8 605.0L797.2 607.0L795.8 609.0L797.2 611.0L795.8 613.0L797.2 615.0L795.8 617.0L797.2 619.0L795.8 621.0L797.2 623.0L795.8 625.0L797.2 627.0L795.8 629.0L797.2 631.0L795.8 633.0L797.2 635.0L795.8 637.0L797.2 639.0L795.8 641.0L797.2 643.0L795.8 645.0L797.2 647.0L795.8 649.0L797.2 651.0L795.8 652.6M568.4 651.9L570.4 649.3L572.4 651.9L574.4 649.3L576.4 651.9L578.4 649.3L580.1 651.9M672.8 651.9L674.8 649.3L676.8 651.9L678.8 649.3L680.8 651.9L682.8 649.3L684.8 651.9L686.8 649.3L688.8 651.9L690.8 649.3L692.8 651.9L694.8 649.3L696.8 651.9L698.8 649.3L700.8 651.9L702.8 649.3L704.8 651.9L706.8 649.3L708.8 651.9L710.8 649.3L712.8 651.9L714.8 649.3L716.8 651.9L718.8 649.3L720.8 651.9L722.8 649.3L724.8 651.9L726.8 649.3L728.8 651.9L730.8 649.3L732.8 651.9L734.8 649.3L736.8 651.9L738.8 649.3L739.1 651.9M773.9 651.9L775.9 649.3L777.9 651.9L779.9 649.3L781.9 651.9L783.9 649.3L785.9 651.9L787.9 649.3L789.9 651.9L791.9 649.3L793.9 651.9L795.9 649.3L797.9 651.9L799.9 649.3L801.9 651.9L803.8 649.3M568.4 455.5L611.5 455.5M568.4 459.5L611.5 459.5M641.6 455.5L795.1 455.5M641.6 459.5L795.1 459.5M726.5 591.5L795.1 591.5M730.8 596.5L795.1 596.5M726.5 592.0L726.5 649.3M730.5 596.1L730.5 649.3M730.5 596.5H760.5V601.5H730.5ZM733.7 598.5L748.6 598.5M771.5 601.5H794.5V623.5H771.5ZM469.5 729.5H814.5V857.5H469.5ZM469.3 745.5L814.7 745.5M469.3 761.5L814.7 761.5M469.3 809.5L814.7 809.5M641.5 729.3L641.5 857.4M585.5 809.5L585.5 857.4M613.5 809.5L613.5 831.6M585.7 831.5L641.4 831.5M585.7 820.5L641.4 820.5M585.7 841.5L814.7 841.5M745.5 841.4L745.5 857.4" stroke="#ff0000" stroke-width="1" fill="none"/><path d="M495.0 602.5L495.0 645.4M494.5 603.0L522.0 603.0M494.5 613.0L522.0 613.0M521.0 603.0L521.0 613.6" stroke="#ff0000" stroke-width="2" fill="none"/><path d="M732.0 620.4L732.0 643.6" stroke="#ff0000" stroke-width="2.5" fill="none"/><path d="M128.0 387.1L132.0 382.5M128.0 393.1L132.0 388.5M128.0 399.1L132.0 394.5M128.0 405.1L132.0 400.5M128.0 411.1L132.0 406.5M128.0 417.1L132.0 412.5M128.0 423.1L132.0 418.5M128.0 429.1L132.0 424.5M128.0 435.1L132.0 430.5M128.0 441.1L132.0 436.5M128.0 447.1L132.0 442.5M128.0 453.1L132.0 448.5M128.0 459.1L132.0 454.5M128.0 465.1L132.0 460.5M128.0 471.1L132.0 466.5M128.0 477.1L132.0 472.5M128.0 483.1L132.0 478.5M128.0 489.1L132.0 484.5M128.0 495.1L132.0 490.5M128.0 501.1L132.0 496.5M128.0 507.1L132.0 502.5M128.0 513.1L132.0 508.5M128.0 519.1L132.0 514.5M128.0 525.1L132.0 520.5M128.0 531.1L132.0 526.5M128.0 537.1L132.0 532.5M128.0 543.1L132.0 538.5M128.0 549.1L132.0 544.5M128.0 555.1L132.0 550.5M128.0 561.1L132.0 556.5M128.0 567.1L132.0 562.5M128.0 573.1L132.0 568.5M128.0 579.1L132.0 574.5M128.0 585.1L132.0 580.5M128.0 591.1L132.0 586.5M128.0 597.1L132.0 592.5M128.0 603.1L132.0 598.5M128.0 609.1L132.0 604.5M128.0 615.1L132.0 610.5M128.0 621.1L132.0 616.5M128.0 627.1L132.0 622.5M128.0 633.1L132.0 628.5M128.0 639.1L132.0 634.5M128.0 645.1L132.0 640.5M128.0 651.1L132.0 646.5M128.0 657.1L132.0 652.5M128.0 663.1L132.0 658.5M128.0 669.1L132.0 664.5M128.0 675.1L132.0 670.5M128.0 681.1L132.0 676.5M128.0 687.1L132.0 682.5M128.0 693.1L132.0 688.5M128.0 699.1L132.0 694.5M128.0 705.1L132.0 700.5M441.0 399.9L445.0 393.5M441.0 405.1L445.0 398.7M441.0 410.3L445.0 403.9M441.0 415.5L445.0 409.1M441.0 420.7L445.0 414.3M441.0 425.9L445.0 419.5M441.0 431.1L445.0 424.7M441.0 436.3L445.0 429.9M441.0 441.5L445.0 435.1M441.0 446.7L445.0 440.3M441.0 451.9L445.0 445.5M441.0 457.1L445.0 450.7M441.0 462.3L445.0 455.9M441.0 467.5L445.0 461.1M441.0 472.7L445.0 466.3M441.0 477.6L444.8 471.5M567.5 381.0L575.1 385.0M572.5 381.0L580.1 385.0M577.5 381.0L585.1 385.0M582.5 381.0L590.1 385.0M587.5 381.0L595.1 385.0M592.5 381.0L600.1 385.0M597.5 381.0L605.1 385.0M602.5 381.0L610.1 385.0M607.5 381.0L611.2 383.0M642.8 381.0L650.4 385.0M647.8 381.0L655.4 385.0M652.8 381.0L660.4 385.0M657.8 381.0L665.4 385.0M662.8 381.0L670.4 385.0M667.8 381.0L675.4 385.0M672.8 381.0L680.4 385.0M677.8 381.0L685.4 385.0M682.8 381.0L690.4 385.0M687.8 381.0L695.4 385.0M692.8 381.0L700.4 385.0M697.8 381.0L705.4 385.0M702.8 381.0L710.4 385.0M707.8 381.0L715.4 385.0M712.8 381.0L720.4 385.0M717.8 381.0L725.4 385.0M722.8 381.0L730.4 385.0M727.8 381.0L735.4 385.0M732.8 381.0L740.4 385.0M737.8 381.0L745.4 385.0M742.8 381.0L750.4 385.0M747.8 381.0L755.4 385.0M752.8 381.0L760.4 385.0M757.8 381.0L765.4 385.0M762.8 381.0L770.4 385.0M767.8 381.0L775.4 385.0M772.8 381.0L780.4 385.0M777.8 381.0L785.4 385.0M782.8 381.0L790.4 385.0M787.8 381.0L795.4 385.0M792.8 381.0L800.4 385.0M797.8 381.0L802.8 383.6M799.8 387.7L804.3 382.5M799.8 392.7L804.3 387.5M799.8 397.7L804.3 392.5M799.8 402.7L804.3 397.5M799.8 407.7L804.3 402.5M799.8 412.7L804.3 407.5M799.8 417.7L804.3 412.5M799.8 422.7L804.3 417.5M799.8 427.7L804.3 422.5M799.8 432.7L804.3 427.5M799.8 437.7L804.3 432.5M799.8 442.7L804.3 437.5M799.8 447.7L804.3 442.5M799.8 452.7L804.3 447.5M799.8 457.7L804.3 452.5M799.8 462.7L804.3 457.5M799.8 467.7L804.3 462.5M799.8 472.7L804.3 467.5M799.8 477.7L804.3 472.5M799.8 482.7L804.3 477.5M799.8 487.7L804.3 482.5M799.8 492.7L804.3 487.5M799.8 497.7L804.3 492.5M799.8 502.7L804.3 497.5M799.8 507.7L804.3 502.5M799.8 512.7L804.3 507.5M799.8 517.7L804.3 512.5M799.8 522.7L804.3 517.5M799.8 527.7L804.3 522.5M799.8 532.7L804.3 527.5M799.8 537.7L804.3 532.5M799.8 542.7L804.3 537.5M799.8 547.7L804.3 542.5M799.8 552.7L804.3 547.5M799.8 557.7L804.3 552.5M799.8 562.7L804.3 557.5M799.8 567.7L804.3 562.5M799.8 572.7L804.3 567.5M799.8 577.7L804.3 572.5M799.8 582.7L804.3 577.5M799.8 587.7L804.3 582.5M799.8 592.7L804.3 587.5M799.8 597.7L804.3 592.5M799.8 602.7L804.3 597.5M799.8 607.7L804.3 602.5M799.8 612.7L804.3 607.5M799.8 617.7L804.3 612.5M799.8 622.7L804.3 617.5M799.8 627.7L804.3 622.5M799.8 632.7L804.3 627.5M799.8 637.7L804.3 632.5M799.8 642.7L804.3 637.5M799.8 647.7L804.3 642.5M799.8 652.6L804.2 647.5M794.1 660.3L803.8 652.6M794.1 666.8L803.8 659.1M794.1 673.3L803.8 665.6M794.1 679.8L803.8 672.1M794.1 686.3L803.8 678.6M794.1 692.8L803.8 685.1M794.1 699.3L803.8 691.6M794.1 705.8L803.8 698.1M794.1 706.4L796.5 704.6" stroke="#000000" stroke-width="0.75" fill="none"/><path d="M129.5 381.0L137.1 385.0M136.5 381.0L144.1 385.0M143.5 381.0L151.1 385.0M150.5 381.0L158.1 385.0M157.5 381.0L165.1 385.0M164.5 381.0L168.4 383.1M139.5 392.5L168.4 392.5M225.7 381.0L233.3 385.0M232.7 381.0L240.3 385.0M239.7 381.0L247.3 385.0M246.7 381.0L254.3 385.0M253.7 381.0L261.3 385.0M260.7 381.0L268.3 385.0M267.7 381.0L275.3 385.0M274.7 381.0L278.3 382.9M225.7 392.5L278.3 392.5M406.4 381.0L414.0 385.0M413.4 381.0L421.0 385.0M420.4 381.0L428.0 385.0M427.4 381.0L435.0 385.0M434.4 381.0L442.0 385.0M441.4 381.0L449.0 385.0M448.4 381.0L456.0 385.0M455.4 381.0L463.0 385.0M462.4 381.0L470.0 385.0M469.4 381.0L474.6 383.7M406.4 392.5L474.6 392.5M530.9 381.0L538.5 385.0M537.9 381.0L545.5 385.0M544.9 381.0L552.5 385.0M551.9 381.0L559.5 385.0M558.9 381.0L566.5 385.0M565.9 381.0L567.5 381.8M530.9 392.5L567.5 392.5M168.5 381.5H225.5V393.5H168.5ZM168.4 388.5L225.7 388.5M170.4 391.5L223.7 391.5M170.5 388.5L170.5 393.5M223.5 388.5L223.5 393.5M182.5 388.5L182.5 393.5M184.5 388.5L184.5 393.5M278.5 381.5H372.5V393.5H278.5ZM278.3 388.5L372.4 388.5M280.3 391.5L370.4 391.5M280.5 388.5L280.5 393.5M370.5 388.5L370.5 393.5M321.5 388.5L321.5 393.5M328.5 388.5L328.5 393.5M474.5 381.5H530.5V393.5H474.5ZM474.6 388.5L530.9 388.5M476.6 391.5L528.9 391.5M476.5 388.5L476.5 393.5M529.5 388.5L529.5 393.5M488.5 388.5L488.5 393.5M489.5 388.5L489.5 393.5M139.5 392.5L139.5 695.5M129.5 703.5L134.4 707.0M135.5 703.5L140.4 707.0M141.5 703.5L146.4 707.0M147.5 703.5L152.4 707.0M153.5 703.5L158.4 707.0M159.5 703.5L164.4 707.0M165.5 703.5L168.4 705.6M139.5 695.5L168.4 695.5M225.5 703.5L230.4 707.0M231.5 703.5L236.4 707.0M237.5 703.5L242.4 707.0M243.5 703.5L248.4 707.0M249.5 703.5L254.4 707.0M255.5 703.5L260.4 707.0M261.5 703.5L266.4 707.0M267.5 703.5L272.4 707.0M225.5 695.5L274.5 695.5M330.6 703.5L335.5 707.0M336.6 703.5L341.5 707.0M342.6 703.5L347.5 707.0M348.6 703.5L353.5 707.0M354.6 703.5L359.5 707.0M360.6 703.5L365.5 707.0M366.6 703.5L371.5 707.0M372.6 703.5L377.5 707.0M378.6 703.5L383.5 707.0M384.6 703.5L389.5 707.0M390.6 703.5L395.5 707.0M396.6 703.5L401.5 707.0M402.6 703.5L407.1 706.7M330.6 695.5L407.1 695.5M430.8 703.5L435.7 707.0M436.8 703.5L441.7 707.0M442.8 703.5L447.7 707.0M448.8 703.5L451.5 705.4M430.8 695.5L441.5 695.5M168.5 694.5H225.5V706.5H168.5ZM168.4 699.5L225.5 699.5M170.4 696.5L223.5 696.5M170.5 699.5L170.5 694.5M223.5 699.5L223.5 694.5M182.5 699.5L182.5 694.5M184.5 699.5L184.5 694.5M274.5 694.5H330.5V706.5H274.5ZM274.5 699.5L330.6 699.5M276.5 696.5L328.6 696.5M276.5 699.5L276.5 694.5M328.5 699.5L328.5 694.5M314.5 699.5L314.5 694.5M316.5 699.5L316.5 694.5M407.5 694.5H430.5V706.5H407.5ZM407.1 699.5L430.8 699.5M409.1 696.5L428.8 696.5M408.5 699.5L408.5 694.5M429.5 699.5L429.5 694.5M562.5 393.5L562.5 647.0M567.5 649.5L581.0 649.5M581.5 649.5L581.5 698.9M372.5 381.5H406.5V393.5H372.5ZM372.4 384.5L406.4 384.5M372.4 386.5L406.4 386.5M372.4 389.5L406.4 389.5M372.4 391.5L406.4 391.5M374.5 381.5L374.5 393.5M375.5 381.5L375.5 393.5M404.5 381.5L404.5 393.5M404.5 358.3L404.5 419.7M375.4 387.5L376.4 379.9L379.3 372.9L384.0 366.8L390.0 362.1L397.1 359.2L404.7 358.2M375.4 387.5L376.4 395.1L379.3 402.1L384.0 408.2L390.1 412.9L397.1 415.8L404.7 416.8M399.5 358.5L404.7 358.5M399.5 419.5L404.7 419.5M140.5 529.5H215.5V574.5H140.5ZM159.5 529.5L159.5 574.0M178.5 529.5L178.5 574.0M196.5 529.5L196.5 574.0M140.5 551.5L215.8 551.5M221.5 529.5H253.5V533.5H221.5ZM251.5 499.3L251.5 529.5M221.2 529.5L222.2 521.7L225.2 514.4L230.0 508.1L236.3 503.3L243.6 500.3L251.4 499.3M221.5 569.5H253.5V573.5H221.5ZM251.5 573.5L251.5 603.4M221.4 573.5L222.4 581.3L225.4 588.5L230.2 594.7L236.4 599.5L243.6 602.5L251.4 603.5M304.5 529.5H326.5V552.5H304.5ZM305.3 551.6L315.2 537.6L315.2 546.8L325.6 530.0M347.5 603.5H370.5V622.5H347.5ZM348.4 621.5L359.1 610.0L359.1 617.7L370.4 603.7M350.5 648.5H363.5V669.5H350.5ZM350.4 657.5L363.8 657.5M358.5 653.5L364.5 659.5M364.0 653.5L358.8 659.5M361.5 652.5L361.5 660.5M400.5 646.5H438.5V650.5H400.5ZM436.5 611.6L436.5 646.3M401.8 646.3L403.0 637.3L406.4 628.9L412.0 621.8L419.1 616.2L427.5 612.8L436.5 611.6M440.5 609.5H444.5V635.5H440.5ZM417.4 633.5L440.5 633.5M417.3 633.1L418.1 627.1L420.4 621.5L424.1 616.7L428.9 613.0L434.5 610.7L440.5 609.9M440.5 478.5H444.5V511.5H440.5ZM444.5 509.5L474.8 509.5M474.5 501.4L474.5 509.5M444.5 479.1L452.4 480.1L459.7 483.2L466.0 488.0L470.8 494.3L473.9 501.6L474.9 509.5M490.5 511.5H520.5V515.5H490.5ZM518.5 484.2L518.5 511.4M511.5 484.5L518.7 484.5M491.5 511.4L492.4 504.4L495.1 497.8L499.5 492.2L505.1 487.8L511.7 485.1L518.7 484.2M446.5 560.5H453.5V575.5H446.5ZM453.3 560.4L465.3 560.4L466.8 560.7L468.1 561.4L469.3 562.6L470.2 564.1L470.7 565.9L470.9 567.8L470.7 569.8L470.2 571.6L469.3 573.1L468.1 574.3L466.8 575.0L465.3 575.3L453.3 575.3M495.5 582.5H521.5V586.5H495.5ZM497.5 560.4L497.5 582.6M497.2 560.4L502.9 561.2L508.3 563.4L512.9 566.9L516.4 571.5L518.6 576.9L519.4 582.6M536.5 557.5H541.5V563.5H536.5ZM538.0 559.0L540.5 561.8M544.5 573.0L544.5 582.6M541.3 576.5L547.3 576.5M542.3 578.5L546.3 578.5M448.5 586.5H470.5V603.5H448.5ZM450.5 589.5H469.5V601.5H450.5ZM459.5 588.3L459.5 597.7M455.2 593.5L464.2 593.5M457.2 595.5L462.2 595.5M536.5 588.5H555.5V602.5H536.5ZM537.3 601.6L546.1 593.3L546.1 599.0L555.4 588.8M480.5 626.5H488.5V641.5H480.5ZM480.2 626.3L469.9 626.3L468.4 626.6L467.0 627.3L465.9 628.5L465.0 630.1L464.4 631.9L464.2 633.9L464.4 635.9L465.0 637.7L465.9 639.3L467.0 640.5L468.4 641.2L469.9 641.5L480.2 641.5M440.5 656.5H452.5V694.5H440.5ZM443.5 656.5L443.5 694.3M446.5 656.5L446.5 694.3M452.5 658.5L474.5 658.5M474.5 658.6L474.5 663.5M476.2 662.8L474.7 668.9L472.1 674.5L468.3 679.4L463.6 683.5L458.2 686.5L452.3 688.4M611.5 381.5H642.5V390.5H611.5ZM611.2 384.5L642.8 384.5M611.2 387.5L642.8 387.5M613.5 381.5L613.5 390.5M640.5 381.5L640.5 390.5M640.5 364.5L640.5 382.0M633.0 364.5L640.1 364.5M615.4 381.7L617.7 376.9L621.0 372.6L625.0 369.1L629.7 366.5L634.8 364.9L640.1 364.4M611.5 455.5H641.5V459.5H611.5ZM611.5 458.5L641.6 458.5M640.5 459.9L640.5 484.6M632.8 484.5L640.1 484.5M614.1 459.9L614.9 466.6L617.5 472.9L621.7 478.3L627.1 482.4L633.3 485.0L640.1 485.9M672.5 656.6L672.5 697.4M665.3 697.5L672.8 697.5M626.1 655.3L623.8 666.5L618.7 676.7L611.3 685.4L602.1 692.0L591.4 696.1L580.1 697.5M626.7 655.3L629.1 666.5L634.2 676.7L641.6 685.4L650.8 692.0L661.5 696.1L672.8 697.5M626.5 652.4L626.5 660.7M739.5 649.5H773.5V656.5H739.5ZM739.1 652.5L773.9 652.5M771.5 656.3L771.5 678.9M764.7 678.5L771.6 678.5M742.6 656.0L744.8 662.3L748.4 667.9L753.1 672.6L758.7 676.1L765.0 678.3L771.6 679.1" stroke="#000000" stroke-width="1" fill="none"/><path d="M448.0 694.5L448.0 703.5" stroke="#000000" stroke-width="2" fill="none"/></g><g text-rendering="geometricPrecision"><text x="183.6" y="378.8" font-size="8.00" fill="#000000" font-family="Liberation Sans, sans-serif" textLength="26.1" lengthAdjust="spacingAndGlyphs" stroke="#000000" stroke-width="0.18">I15x13</text><text x="312.0" y="378.8" font-size="8.00" fill="#000000" font-family="Liberation Sans, sans-serif" textLength="28.2" lengthAdjust="spacingAndGlyphs" stroke="#000000" stroke-width="0.18">I25x13</text><text x="489.8" y="378.6" font-size="8.00" fill="#000000" font-family="Liberation Sans, sans-serif" textLength="26.1" lengthAdjust="spacingAndGlyphs" stroke="#000000" stroke-width="0.18">I15x13</text><text x="183.7" y="716.0" font-size="8.00" fill="#000000" font-family="Liberation Sans, sans-serif" textLength="26.1" lengthAdjust="spacingAndGlyphs" stroke="#000000" stroke-width="0.18">I15x13</text><text x="289.7" y="716.0" font-size="8.00" fill="#000000" font-family="Liberation Sans, sans-serif" textLength="26.1" lengthAdjust="spacingAndGlyphs" stroke="#000000" stroke-width="0.18">I15x13</text><text x="408.0" y="714.6" font-size="8.00" fill="#000000" font-family="Liberation Sans, sans-serif" textLength="22.4" lengthAdjust="spacingAndGlyphs" stroke="#000000" stroke-width="0.18">I6x13</text><text x="377.9" y="356.7" font-size="8.00" fill="#000000" font-family="Liberation Sans, sans-serif" textLength="22.6" lengthAdjust="spacingAndGlyphs" stroke="#000000" stroke-width="0.18">U09V</text><text x="377.9" y="426.6" font-size="8.00" fill="#000000" font-family="Liberation Sans, sans-serif" textLength="22.6" lengthAdjust="spacingAndGlyphs" stroke="#000000" stroke-width="0.18">U09V</text><text x="228.0" y="499.7" font-size="8.00" fill="#000000" font-family="Liberation Sans, sans-serif" textLength="16.8" lengthAdjust="spacingAndGlyphs" stroke="#000000" stroke-width="0.18">09V</text><text x="228.0" y="609.8" font-size="8.00" fill="#000000" font-family="Liberation Sans, sans-serif" textLength="16.8" lengthAdjust="spacingAndGlyphs" stroke="#000000" stroke-width="0.18">060</text><text x="305.5" y="551.5" font-size="5.50" fill="#000000" font-family="Liberation Sans, sans-serif" textLength="20.0" lengthAdjust="spacingAndGlyphs" font-weight="bold">KK/KK</text><text x="347.6" y="628.9" font-size="6.20" fill="#ff0000" font-family="Liberation Sans, sans-serif" textLength="13.5" lengthAdjust="spacingAndGlyphs" font-weight="bold">APK</text><path d="M347.4 645.5L370.9 645.5" stroke="#ff0000" stroke-width="1" stroke-dasharray="4 2" fill="none"/><path d="M274.5 671.7L274.5 694.5" stroke="#ff0000" stroke-width="1" stroke-dasharray="6 3" fill="none"/><path d="M330.5 671.7L330.5 694.5" stroke="#ff0000" stroke-width="1" stroke-dasharray="6 3" fill="none"/><text x="409.1" y="612.7" font-size="8.00" fill="#000000" font-family="Liberation Sans, sans-serif" textLength="20.5" lengthAdjust="spacingAndGlyphs" stroke="#000000" stroke-width="0.18">010V</text><text x="413.0" y="633.0" transform="rotate(-62 413.0 633.0)" font-size="8.00" fill="#000000" font-family="Liberation Sans, sans-serif" textLength="16.8" lengthAdjust="spacingAndGlyphs" stroke="#000000" stroke-width="0.18">060</text><text x="474.4" y="486.2" transform="rotate(90 474.4 486.2)" font-size="8.00" fill="#000000" font-family="Liberation Sans, sans-serif" textLength="16.8" lengthAdjust="spacingAndGlyphs" stroke="#000000" stroke-width="0.18">09V</text><text x="497.0" y="484.6" font-size="8.00" fill="#000000" font-family="Liberation Sans, sans-serif" textLength="16.8" lengthAdjust="spacingAndGlyphs" stroke="#000000" stroke-width="0.18">08V</text><text x="500.1" y="560.6" font-size="8.00" fill="#000000" font-family="Liberation Sans, sans-serif" textLength="16.8" lengthAdjust="spacingAndGlyphs" stroke="#000000" stroke-width="0.18">070</text><text x="481.6" y="689.3" transform="rotate(-90 481.6 689.3)" font-size="8.00" fill="#000000" font-family="Liberation Sans, sans-serif" textLength="26.3" lengthAdjust="spacingAndGlyphs" stroke="#000000" stroke-width="0.18">U010B</text><text x="471.3" y="733.5" font-size="4.60" fill="#000000" font-family="Liberation Sans, sans-serif" textLength="25.0" lengthAdjust="spacingAndGlyphs" font-weight="bold" stroke="#000000" stroke-width="0.45">KAUP.OSA/KYLÄ</text><text x="524.0" y="733.5" font-size="4.60" fill="#000000" font-family="Liberation Sans, sans-serif" textLength="30.0" lengthAdjust="spacingAndGlyphs" font-weight="bold" stroke="#000000" stroke-width="0.45">KORTTELI/TILA</text><text x="471.3" y="749.7" font-size="4.60" fill="#000000" font-family="Liberation Sans, sans-serif" textLength="44.0" lengthAdjust="spacingAndGlyphs" font-weight="bold" stroke="#000000" stroke-width="0.45">RAKENNUSTOIMENPIDE</text><text x="471.3" y="765.7" font-size="4.60" fill="#000000" font-family="Liberation Sans, sans-serif" textLength="73.0" lengthAdjust="spacingAndGlyphs" font-weight="bold" stroke="#000000" stroke-width="0.45">RAKENNUSKOHTEEN NIMI JA OSOITE</text><text x="587.2" y="813.7" font-size="4.60" fill="#000000" font-family="Liberation Sans, sans-serif" textLength="15.0" lengthAdjust="spacingAndGlyphs" font-weight="bold" stroke="#000000" stroke-width="0.45">SUUNN.</text><text x="615.0" y="813.7" font-size="4.60" fill="#000000" font-family="Liberation Sans, sans-serif" textLength="11.0" lengthAdjust="spacingAndGlyphs" font-weight="bold" stroke="#000000" stroke-width="0.45">PIIRT.</text><text x="643.2" y="813.7" font-size="4.60" fill="#000000" font-family="Liberation Sans, sans-serif" textLength="124.0" lengthAdjust="spacingAndGlyphs" font-weight="bold" stroke="#000000" stroke-width="0.45">SUUNNITTELUALA, TYÖN NUMERO JA PIIRUSTUKSEN NUMERO</text><text x="790.0" y="813.7" font-size="4.60" fill="#000000" font-family="Liberation Sans, sans-serif" textLength="16.0" lengthAdjust="spacingAndGlyphs" font-weight="bold" stroke="#000000" stroke-width="0.45">MUUTOS</text><text x="587.2" y="824.7" font-size="4.60" fill="#000000" font-family="Liberation Sans, sans-serif" textLength="17.0" lengthAdjust="spacingAndGlyphs" font-weight="bold" stroke="#000000" stroke-width="0.45">YHTEYSH.</text><text x="615.0" y="824.7" font-size="4.60" fill="#000000" font-family="Liberation Sans, sans-serif" textLength="12.0" lengthAdjust="spacingAndGlyphs" font-weight="bold" stroke="#000000" stroke-width="0.45">TARK.</text><text x="587.2" y="835.5" font-size="4.60" fill="#000000" font-family="Liberation Sans, sans-serif" textLength="9.5" lengthAdjust="spacingAndGlyphs" font-weight="bold" stroke="#000000" stroke-width="0.45">PVM.</text><text x="587.2" y="845.7" font-size="4.60" fill="#000000" font-family="Liberation Sans, sans-serif" textLength="19.0" lengthAdjust="spacingAndGlyphs" font-weight="bold" stroke="#000000" stroke-width="0.45">ALLEKIRJ.</text><text x="747.5" y="845.7" font-size="4.60" fill="#000000" font-family="Liberation Sans, sans-serif" textLength="28.0" lengthAdjust="spacingAndGlyphs" font-weight="bold" stroke="#000000" stroke-width="0.45">TILAAJAN NRO</text><text x="647.2 659.0 671.2" y="836.2" font-size="18.60" fill="#00ff00" font-family="DejaVu Sans Light, sans-serif" stroke="#00ff00" stroke-width="0.25">LVI</text></g></svg><div class="pill" style="left:1785.5px;top:23.19999999999999px"></div><div class="topbox" style="left:1803.2px;top:97.19999999999999px"></div><span class="t" style="left:1818.24px;top:118.88px;font-size:16.8px;line-height:21px;color:#858585;transform:scaleX(1.1055);">Top</span><svg width="98" height="35" viewBox="0 0 98 35" style="left:1785.5px;top:23.19999999999999px"><path d="M32.9 4.8v24.8M63.9 4.8v24.8" stroke="#c2c2c2" stroke-width="1" fill="none"/><path d="M14.6 14.1C11.600 15.200 9.300 17.200 8 19.600c2 3.600 5.400 5.600 9.400 5.600s7.200-1.900 9-5.200c-.3-.7-.7-1.300-1.100-1.900" fill="none" stroke="#787878" stroke-width="1.3" stroke-linecap="round"/><path d="M20.200 19.700a3.200 3.200 0 1 1-3.600-3.700" fill="none" stroke="#787878" stroke-width="1.3" stroke-linecap="round"/><path d="M21.40 12.10L21.40 8.25M21.40 12.10L18.07 10.18M21.40 12.10L18.07 14.03M21.40 12.10L21.40 15.95M21.40 12.10L24.73 14.03M21.40 12.10L24.73 10.17" stroke="#787878" stroke-width="2.3" stroke-linecap="round" fill="none"/><circle cx="21.4" cy="12.1" r="3.3" fill="#787878"/><circle cx="21.4" cy="12.1" r="1.5" fill="#dcdcdc"/><path d="M40.8 14.800h9.300v9.500h-9.300zM40.8 14.800l4.200-3.700h6.600M50.1 14.800l5-6.500v13.800l-5 4.400z" fill="none" stroke="#787878" stroke-width="1.3" stroke-linejoin="round"/><circle cx="78.2" cy="16" r="7" fill="none" stroke="#787878" stroke-width="1.3"/><path d="M83.300 21.200l4.700 4.300M74.300 14.400h3.800M76.200 12.500v3.800M78 18.400h3.800" fill="none" stroke="#787878" stroke-width="1.2" stroke-linecap="round"/></svg></div><div class="fwin"><div class="ftitle"></div><div class="a" style="left:11px;top:9px;width:20px;height:20px;border-radius:3.5px;background:linear-gradient(200deg,#ee7a0c,#e4700a 55%,#f08a1a);overflow:hidden"></div><span class="t" style="left:16.78px;top:13.02px;font-size:11.5px;line-height:14px;color:#fff;font-weight:bold;transform:scaleX(1.0259);">D</span><span class="t" style="left:37.31px;top:9.96px;font-size:15.4px;line-height:19px;color:#8a8a8a;transform:scaleX(0.9490);">CADMATIC 2024 Draw: arkki.drw - C:\ProgramData\CADMATIC\Draw 24 English\Samples</span><svg width="945" height="39" viewBox="582 135 945 39"><path d="M1374.3 154.5h12" stroke="#8a8a8a" stroke-width="1" fill="none"/><rect x="1432.5" y="148.5" width="11" height="11" rx="1.6" fill="none" stroke="#8a8a8a" stroke-width="1"/><path d="M1491.3 148.3l11.6 11.6M1502.900 148.3l-11.6 11.6" stroke="#8a8a8a" stroke-width="1" fill="none"/></svg><div class="fbody"><svg class="cad" width="944" height="635" viewBox="582 174 944 635"><g shape-rendering="crispEdges"><path d="M364.5 278.5H947.5V705.5H364.5ZM383.3 313.5L415.5 313.5M393.0 322.5L415.5 322.5M461.8 313.5L504.3 313.5M461.8 322.5L504.3 322.5M607.7 313.5L662.8 313.5M607.7 322.5L662.8 322.5M708.2 313.5L737.8 313.5M708.2 322.5L737.8 322.5M383.5 313.1L383.5 575.6M392.5 322.8L392.5 565.9M383.3 575.5L415.5 575.5M393.0 565.5L415.5 565.5M461.6 575.5L501.2 575.5M461.6 565.5L501.2 565.5M546.5 575.5L608.3 575.5M546.5 565.5L608.3 565.5M627.4 575.5L644.9 575.5M627.4 565.5L635.2 565.5M644.5 565.9L644.5 575.6M738.5 320.5L738.5 528.0M635.7 527.5L737.8 527.5M644.9 534.5L747.9 534.5M636.5 527.9L636.5 534.8M737.8 313.5L773.1 313.5M737.8 320.5L773.1 320.5M798.6 313.5L928.6 313.5M798.6 320.5L921.3 320.5M928.5 313.1L928.5 532.0M921.5 320.4L921.5 532.0M738.5 534.5L748.0 534.5M822.8 534.5L876.4 534.5M904.5 534.5L928.6 534.5M920.5 532.5H929.5V575.5H920.5Z" stroke="#00ff00" stroke-width="1" fill="none"/><path d="M737.8 319.5L773.1 319.5M798.6 319.5L922.1 319.5M922.5 319.6L922.5 532.0" stroke="#010101" stroke-width="1" fill="none"/><path d="M386.1 317.0L415.5 317.0M461.8 317.0L504.3 317.0M607.7 317.0L662.8 317.0M708.2 317.0L737.8 317.0M387.0 315.5L387.0 573.1M385.7 572.0L415.5 572.0M461.6 572.0L501.2 572.0M546.5 572.0L608.3 572.0M627.4 572.0L642.5 572.0M638.9 533.0L747.9 533.0M737.8 317.0L773.1 317.0M798.6 317.0L925.8 317.0M925.0 315.9L925.0 532.0M738.5 533.0L748.0 533.0M822.8 533.0L876.4 533.0M904.5 533.0L928.6 533.0" stroke="#010101" stroke-width="2" fill="none"/><path d="M392.6 322.1L398.2 317.8L403.9 322.1L409.6 317.8L415.2 322.1L415.5 317.8M461.8 322.1L467.4 317.8L473.1 322.1L478.8 317.8L484.4 322.1L490.1 317.8L495.7 322.1L501.4 317.8L504.3 322.1M607.7 322.1L613.4 317.8L619.0 322.1L624.7 317.8L630.3 322.1L636.0 317.8L641.6 322.1L647.3 317.8L652.9 322.1L658.6 317.8L662.8 322.1M708.2 322.1L713.9 317.8L719.6 322.1L725.2 317.8L730.9 322.1L736.5 317.8L737.8 322.1M392.2 322.4L387.3 327.2L392.2 331.9L387.3 336.7L392.2 341.5L387.3 346.2L392.2 351.0L387.3 355.8L392.2 360.5L387.3 365.3L392.2 370.1L387.3 374.8L392.2 379.6L387.3 384.3L392.2 389.1L387.3 393.9L392.2 398.6L387.3 403.4L392.2 408.2L387.3 412.9L392.2 417.7L387.3 422.5L392.2 427.2L387.3 432.0L392.2 436.8L387.3 441.5L392.2 446.3L387.3 451.0L392.2 455.8L387.3 460.6L392.2 465.3L387.3 470.1L392.2 474.9L387.3 479.6L392.2 484.4L387.3 489.2L392.2 493.9L387.3 498.7L392.2 503.5L387.3 508.2L392.2 513.0L387.3 517.7L392.2 522.5L387.3 527.3L392.2 532.0L387.3 536.8L392.2 541.6L387.3 546.3L392.2 551.1L387.3 555.9L392.2 560.6L387.3 565.4L392.2 570.1L387.3 571.5M392.6 566.6L397.4 571.5L402.3 566.6L407.1 571.5L412.0 566.6L415.5 571.5M461.6 566.6L466.5 571.5L471.3 566.6L476.2 571.5L481.0 566.6L485.9 571.5L490.7 566.6L495.6 571.5L500.4 566.6L501.2 571.5M546.5 566.6L551.3 571.5L556.2 566.6L561.0 571.5L565.9 566.6L570.7 571.5L575.6 566.6L580.4 571.5L585.3 566.6L590.1 571.5L595.0 566.6L599.8 571.5L604.6 566.6L608.3 571.5M627.4 566.6L632.3 571.5L637.1 566.6L640.9 571.5M737.7 322.8L734.1 326.8L737.7 330.9L734.1 334.9L737.7 339.0L734.1 343.0L737.7 347.0L734.1 351.1L737.7 355.1L734.1 359.1L737.7 363.2L734.1 367.2L737.7 371.3L734.1 375.3L737.7 379.3L734.1 383.4L737.7 387.4L734.1 391.4L737.7 395.5L734.1 399.5L737.7 403.6L734.1 407.6L737.7 411.6L734.1 415.7L737.7 419.7L734.1 423.7L737.7 427.8L734.1 431.8L737.7 435.9L734.1 439.9L737.7 443.9L734.1 448.0L737.7 452.0L734.1 456.0L737.7 460.1L734.1 464.1L737.7 468.2L734.1 472.2L737.7 476.2L734.1 480.3L737.7 484.3L734.1 488.3L737.7 492.4L734.1 496.4L737.7 500.5L734.1 504.5L737.7 508.5L734.1 512.6L737.7 516.6L734.1 520.6L737.7 524.7L734.1 527.5M638.9 528.5L643.7 532.5L648.6 528.5L653.4 532.5L658.3 528.5L663.1 532.5L668.0 528.5L672.8 532.5L677.6 528.5L682.5 532.5L687.3 528.5L692.2 532.5L697.0 528.5L701.9 532.5L706.7 528.5L711.6 532.5L716.4 528.5L721.2 532.5L726.1 528.5L730.9 532.5L735.8 528.5L737.8 532.5M738.6 530.4L741.0 532.2L743.5 530.4L745.9 532.2L747.9 530.4M453.5 432.5H457.5V435.5H453.5ZM453.5 464.5H457.5V468.5H453.5ZM484.5 322.8L484.5 432.6M486.5 322.8L486.5 435.9M484.2 435.5L486.7 435.5M484.5 468.2L484.5 565.9M486.5 464.9L486.5 565.9M484.2 464.5L486.7 464.5M512.5 432.5H525.5V435.5H512.5ZM542.5 432.5H596.5V451.5H542.5ZM561.5 432.6L561.5 451.3M577.5 432.6L577.5 451.3M579.5 432.6L579.5 451.3M560.5 480.5H581.5V547.5H560.5ZM569.5 480.1L569.5 547.5M579.5 480.1L579.5 547.5M560.1 492.5L579.0 492.5M486.7 547.5L560.1 547.5M569.5 547.5L569.5 565.9M579.5 547.5L579.5 565.9M581.5 547.5L581.5 565.9M581.1 526.5L603.2 526.5M581.1 530.5L603.2 530.5M589.5 530.1L589.5 548.1M598.5 530.1L598.5 565.9M581.1 548.5L598.5 548.5M635.5 418.1L635.5 497.3M638.5 421.3L638.5 497.3M635.5 518.1L635.5 526.9M638.5 518.1L638.5 526.9M635.5 322.8L635.5 390.7M639.5 322.8L639.5 390.7M639.5 322.5H657.5V342.5H639.5ZM639.5 342.5H662.5V385.5H639.5ZM681.5 323.5H689.5V368.5H681.5ZM681.5 323.5L689.0 368.8M695.5 323.5H719.5V368.5H695.5ZM696.1 323.5L719.1 368.8M724.5 323.5H733.5V368.5H724.5ZM725.0 323.5L732.7 368.8M638.5 418.5L675.9 418.5M638.5 421.5L675.9 421.5M699.9 418.5L733.2 418.5M699.9 421.5L733.2 421.5M638.5 475.5L679.5 475.5M638.5 478.5L679.5 478.5M700.5 475.5L733.2 475.5M700.5 478.5L733.2 478.5M638.5 494.5L675.5 494.5M675.5 478.7L675.5 526.9M677.5 478.7L677.5 526.9M678.5 491.5H700.5V500.5H678.5ZM678.5 502.5H732.5V510.5H678.5ZM678.5 510.5H732.5V526.5H678.5ZM737.8 319.6L739.4 318.5L741.0 319.6L742.6 318.5L744.3 319.6L745.9 318.5L747.5 319.6L749.1 318.5L750.7 319.6L752.3 318.5L754.0 319.6L755.6 318.5L757.2 319.6L758.8 318.5L760.4 319.6L762.0 318.5L763.6 319.6L765.3 318.5L766.9 319.6L768.5 318.5L770.1 319.6L771.7 318.5L773.1 319.6M798.6 319.6L800.2 318.5L801.8 319.6L803.4 318.5L805.1 319.6L806.7 318.5L808.3 319.6L809.9 318.5L811.5 319.6L813.1 318.5L814.8 319.6L816.4 318.5L818.0 319.6L819.6 318.5L821.2 319.6L822.8 318.5L824.4 319.6L826.1 318.5L827.7 319.6L829.3 318.5L830.9 319.6L832.5 318.5L834.1 319.6L835.7 318.5L837.4 319.6L839.0 318.5L840.6 319.6L842.2 318.5L843.8 319.6L845.4 318.5L847.0 319.6L848.7 318.5L850.3 319.6L851.9 318.5L853.5 319.6L855.1 318.5L856.7 319.6L858.4 318.5L860.0 319.6L861.6 318.5L863.2 319.6L864.8 318.5L866.4 319.6L868.0 318.5L869.7 319.6L871.3 318.5L872.9 319.6L874.5 318.5L876.1 319.6L877.7 318.5L879.4 319.6L881.0 318.5L882.6 319.6L884.2 318.5L885.8 319.6L887.4 318.5L889.0 319.6L890.7 318.5L892.3 319.6L893.9 318.5L895.5 319.6L897.1 318.5L898.7 319.6L900.3 318.5L902.0 319.6L903.6 318.5L905.2 319.6L906.8 318.5L908.4 319.6L910.0 318.5L911.6 319.6L913.3 318.5L914.9 319.6L916.5 318.5L918.1 319.6L919.7 318.5L921.3 319.6L923.0 318.5L923.3 319.6M922.1 322.4L923.3 324.0L922.1 325.6L923.3 327.3L922.1 328.9L923.3 330.5L922.1 332.1L923.3 333.7L922.1 335.3L923.3 336.9L922.1 338.6L923.3 340.2L922.1 341.8L923.3 343.4L922.1 345.0L923.3 346.6L922.1 348.2L923.3 349.9L922.1 351.5L923.3 353.1L922.1 354.7L923.3 356.3L922.1 357.9L923.3 359.6L922.1 361.2L923.3 362.8L922.1 364.4L923.3 366.0L922.1 367.6L923.3 369.2L922.1 370.9L923.3 372.5L922.1 374.1L923.3 375.7L922.1 377.3L923.3 378.9L922.1 380.5L923.3 382.2L922.1 383.8L923.3 385.4L922.1 387.0L923.3 388.6L922.1 390.2L923.3 391.9L922.1 393.5L923.3 395.1L922.1 396.7L923.3 398.3L922.1 399.9L923.3 401.5L922.1 403.2L923.3 404.8L922.1 406.4L923.3 408.0L922.1 409.6L923.3 411.2L922.1 412.8L923.3 414.5L922.1 416.1L923.3 417.7L922.1 419.3L923.3 420.9L922.1 422.5L923.3 424.2L922.1 425.8L923.3 427.4L922.1 429.0L923.3 430.6L922.1 432.2L923.3 433.8L922.1 435.5L923.3 437.1L922.1 438.7L923.3 440.3L922.1 441.9L923.3 443.5L922.1 445.1L923.3 446.8L922.1 448.4L923.3 450.0L922.1 451.6L923.3 453.2L922.1 454.8L923.3 456.5L922.1 458.1L923.3 459.7L922.1 461.3L923.3 462.9L922.1 464.5L923.3 466.1L922.1 467.8L923.3 469.4L922.1 471.0L923.3 472.6L922.1 474.2L923.3 475.8L922.1 477.4L923.3 479.1L922.1 480.7L923.3 482.3L922.1 483.9L923.3 485.5L922.1 487.1L923.3 488.8L922.1 490.4L923.3 492.0L922.1 493.6L923.3 495.2L922.1 496.8L923.3 498.4L922.1 500.1L923.3 501.7L922.1 503.3L923.3 504.9L922.1 506.5L923.3 508.1L922.1 509.7L923.3 511.4L922.1 513.0L923.3 514.6L922.1 516.2L923.3 517.8L922.1 519.4L923.3 521.1L922.1 522.7L923.3 524.3L922.1 525.9L923.3 527.5L922.1 529.1L923.3 530.7L922.1 532.0M738.5 531.5L740.1 529.4L741.7 531.5L743.3 529.4L745.0 531.5L746.6 529.4L748.0 531.5M822.8 531.5L824.4 529.4L826.0 531.5L827.6 529.4L829.3 531.5L830.9 529.4L832.5 531.5L834.1 529.4L835.7 531.5L837.3 529.4L838.9 531.5L840.6 529.4L842.2 531.5L843.8 529.4L845.4 531.5L847.0 529.4L848.6 531.5L850.3 529.4L851.9 531.5L853.5 529.4L855.1 531.5L856.7 529.4L858.3 531.5L859.9 529.4L861.6 531.5L863.2 529.4L864.8 531.5L866.4 529.4L868.0 531.5L869.6 529.4L871.2 531.5L872.9 529.4L874.5 531.5L876.1 529.4L876.4 531.5M904.5 531.5L906.1 529.4L907.7 531.5L909.3 529.4L911.0 531.5L912.6 529.4L914.2 531.5L915.8 529.4L917.4 531.5L919.0 529.4L920.6 531.5L922.3 529.4L923.9 531.5L925.5 529.4L927.1 531.5L928.6 529.4M738.5 372.5L773.3 372.5M738.5 376.5L773.3 376.5M797.6 372.5L921.6 372.5M797.6 376.5L921.6 376.5M866.2 483.5L921.6 483.5M869.7 486.5L921.6 486.5M866.5 483.1L866.5 529.4M869.5 486.4L869.5 529.4M869.5 486.5H894.5V490.5H869.5ZM872.0 488.5L884.0 488.5M902.5 490.5H920.5V508.5H902.5ZM658.5 593.5H937.5V697.5H658.5ZM658.5 606.5L937.4 606.5M658.5 619.5L937.4 619.5M658.5 658.5L937.4 658.5M797.5 594.0L797.5 697.4M752.5 658.7L752.5 697.4M775.5 658.7L775.5 676.9M752.5 675.5L797.5 675.5M752.5 667.5L797.5 667.5M752.5 684.5L937.4 684.5M881.5 684.5L881.5 697.4" stroke="#ff0000" stroke-width="1" fill="none"/><path d="M679.0 491.6L679.0 526.2M871.0 506.0L871.0 524.8" stroke="#ff0000" stroke-width="2" fill="none"/><path d="M382.9 317.6L386.1 313.9M382.9 322.5L386.1 318.8M382.9 327.3L386.1 323.6M382.9 332.2L386.1 328.5M382.9 337.0L386.1 333.3M382.9 341.9L386.1 338.2M382.9 346.7L386.1 343.0M382.9 351.6L386.1 347.8M382.9 356.4L386.1 352.7M382.9 361.2L386.1 357.5M382.9 366.1L386.1 362.4M382.9 370.9L386.1 367.2M382.9 375.8L386.1 372.1M382.9 380.6L386.1 376.9M382.9 385.5L386.1 381.8M382.9 390.3L386.1 386.6M382.9 395.2L386.1 391.4M382.9 400.0L386.1 396.3M382.9 404.9L386.1 401.1M382.9 409.7L386.1 406.0M382.9 414.5L386.1 410.8M382.9 419.4L386.1 415.7M382.9 424.2L386.1 420.5M382.9 429.1L386.1 425.4M382.9 433.9L386.1 430.2M382.9 438.8L386.1 435.1M382.9 443.6L386.1 439.9M382.9 448.5L386.1 444.7M382.9 453.3L386.1 449.6M382.9 458.1L386.1 454.4M382.9 463.0L386.1 459.3M382.9 467.8L386.1 464.1M382.9 472.7L386.1 469.0M382.9 477.5L386.1 473.8M382.9 482.4L386.1 478.7M382.9 487.2L386.1 483.5M382.9 492.1L386.1 488.3M382.9 496.9L386.1 493.2M382.9 501.8L386.1 498.0M382.9 506.6L386.1 502.9M382.9 511.4L386.1 507.7M382.9 516.3L386.1 512.6M382.9 521.1L386.1 517.4M382.9 526.0L386.1 522.3M382.9 530.8L386.1 527.1M382.9 535.7L386.1 532.0M382.9 540.5L386.1 536.8M382.9 545.4L386.1 541.6M382.9 550.2L386.1 546.5M382.9 555.0L386.1 551.3M382.9 559.9L386.1 556.2M382.9 564.7L386.1 561.0M382.9 569.6L386.1 565.9M382.9 574.4L386.1 570.7M635.7 328.0L638.9 322.8M635.7 332.2L638.9 327.0M635.7 336.4L638.9 331.2M635.7 340.6L638.9 335.4M635.7 344.8L638.9 339.6M635.7 349.0L638.9 343.8M635.7 353.2L638.9 348.0M635.7 357.4L638.9 352.2M635.7 361.6L638.9 356.4M635.7 365.8L638.9 360.6M635.7 370.0L638.9 364.8M635.7 374.2L638.9 369.0M635.7 378.4L638.9 373.2M635.7 382.6L638.9 377.4M635.7 386.8L638.9 381.6M635.7 390.7L638.7 385.8M737.8 312.7L743.9 315.9M741.8 312.7L748.0 315.9M745.9 312.7L752.0 315.9M749.9 312.7L756.0 315.9M754.0 312.7L760.1 315.9M758.0 312.7L764.1 315.9M762.0 312.7L768.2 315.9M766.1 312.7L772.2 315.9M770.1 312.7L773.1 314.3M798.6 312.7L804.7 315.9M802.6 312.7L808.8 315.9M806.7 312.7L812.8 315.9M810.7 312.7L816.8 315.9M814.8 312.7L820.9 315.9M818.8 312.7L824.9 315.9M822.8 312.7L829.0 315.9M826.9 312.7L833.0 315.9M830.9 312.7L837.0 315.9M834.9 312.7L841.1 315.9M839.0 312.7L845.1 315.9M843.0 312.7L849.1 315.9M847.0 312.7L853.2 315.9M851.1 312.7L857.2 315.9M855.1 312.7L861.3 315.9M859.2 312.7L865.3 315.9M863.2 312.7L869.3 315.9M867.2 312.7L873.4 315.9M871.3 312.7L877.4 315.9M875.3 312.7L881.4 315.9M879.4 312.7L885.5 315.9M883.4 312.7L889.5 315.9M887.4 312.7L893.6 315.9M891.5 312.7L897.6 315.9M895.5 312.7L901.6 315.9M899.5 312.7L905.7 315.9M903.6 312.7L909.7 315.9M907.6 312.7L913.7 315.9M911.6 312.7L917.8 315.9M915.7 312.7L921.8 315.9M919.7 312.7L925.9 315.9M923.8 312.7L927.8 314.8M925.4 318.1L929.0 313.9M925.4 322.1L929.0 318.0M925.4 326.2L929.0 322.0M925.4 330.2L929.0 326.0M925.4 334.3L929.0 330.1M925.4 338.3L929.0 334.1M925.4 342.3L929.0 338.2M925.4 346.4L929.0 342.2M925.4 350.4L929.0 346.2M925.4 354.4L929.0 350.3M925.4 358.5L929.0 354.3M925.4 362.5L929.0 358.3M925.4 366.6L929.0 362.4M925.4 370.6L929.0 366.4M925.4 374.6L929.0 370.5M925.4 378.7L929.0 374.5M925.4 382.7L929.0 378.5M925.4 386.7L929.0 382.6M925.4 390.8L929.0 386.6M925.4 394.8L929.0 390.6M925.4 398.9L929.0 394.7M925.4 402.9L929.0 398.7M925.4 406.9L929.0 402.8M925.4 411.0L929.0 406.8M925.4 415.0L929.0 410.8M925.4 419.0L929.0 414.9M925.4 423.1L929.0 418.9M925.4 427.1L929.0 422.9M925.4 431.2L929.0 427.0M925.4 435.2L929.0 431.0M925.4 439.2L929.0 435.1M925.4 443.3L929.0 439.1M925.4 447.3L929.0 443.1M925.4 451.3L929.0 447.2M925.4 455.4L929.0 451.2M925.4 459.4L929.0 455.2M925.4 463.5L929.0 459.3M925.4 467.5L929.0 463.3M925.4 471.5L929.0 467.4M925.4 475.6L929.0 471.4M925.4 479.6L929.0 475.4M925.4 483.6L929.0 479.5M925.4 487.7L929.0 483.5M925.4 491.7L929.0 487.5M925.4 495.8L929.0 491.6M925.4 499.8L929.0 495.6M925.4 503.8L929.0 499.7M925.4 507.9L929.0 503.7M925.4 511.9L929.0 507.7M925.4 515.9L929.0 511.8M925.4 520.0L929.0 515.8M925.4 524.0L929.0 519.8M925.4 528.1L929.0 523.9M925.4 532.0L928.9 527.9M920.8 538.2L928.6 532.0M920.8 543.5L928.6 537.2M920.8 548.7L928.6 542.5M920.8 554.0L928.6 547.7M920.8 559.2L928.6 553.0M920.8 564.5L928.6 558.2M920.8 569.7L928.6 563.5M920.8 575.0L928.6 568.7M920.8 575.5L922.7 574.0" stroke="#000000" stroke-width="0.75" fill="none"/><path d="M384.1 312.7L390.3 315.9M389.8 312.7L395.9 315.9M395.4 312.7L401.6 315.9M401.1 312.7L407.2 315.9M406.7 312.7L412.9 315.9M412.4 312.7L415.5 314.4M392.2 322.5L415.5 322.5M461.8 312.7L467.9 315.9M467.4 312.7L473.6 315.9M473.1 312.7L479.2 315.9M478.8 312.7L484.9 315.9M484.4 312.7L490.5 315.9M490.1 312.7L496.2 315.9M495.7 312.7L501.8 315.9M501.4 312.7L504.3 314.2M461.8 322.5L504.3 322.5M607.7 312.7L613.8 315.9M613.4 312.7L619.5 315.9M619.0 312.7L625.2 315.9M624.7 312.7L630.8 315.9M630.3 312.7L636.5 315.9M636.0 312.7L642.1 315.9M641.6 312.7L647.8 315.9M647.3 312.7L653.4 315.9M652.9 312.7L659.1 315.9M658.6 312.7L662.8 314.9M607.7 322.5L662.8 322.5M708.2 312.7L714.4 315.9M713.9 312.7L720.0 315.9M719.6 312.7L725.7 315.9M725.2 312.7L731.3 315.9M730.9 312.7L737.0 315.9M736.5 312.7L737.8 313.4M708.2 322.5L737.8 322.5M415.5 313.5H461.5V322.5H415.5ZM415.5 318.5L461.8 318.5M417.1 320.5L460.2 320.5M416.5 318.8L416.5 322.8M460.5 318.8L460.5 322.8M426.5 318.8L426.5 322.8M428.5 318.8L428.5 322.8M504.5 313.5H580.5V322.5H504.5ZM504.3 318.5L580.3 318.5M505.9 320.5L578.6 320.5M505.5 318.8L505.5 322.8M578.5 318.8L578.5 322.8M539.5 318.8L539.5 322.8M544.5 318.8L544.5 322.8M662.5 313.5H708.5V322.5H662.5ZM662.8 318.5L708.2 318.5M664.4 320.5L706.6 320.5M664.5 318.8L664.5 322.8M706.5 318.8L706.5 322.8M673.5 318.8L673.5 322.8M674.5 318.8L674.5 322.8M392.5 322.0L392.5 566.7M384.1 573.1L388.1 576.0M389.0 573.1L392.9 576.0M393.8 573.1L397.8 576.0M398.7 573.1L402.6 576.0M403.5 573.1L407.5 576.0M408.3 573.1L412.3 576.0M413.2 573.1L415.5 574.8M392.2 566.5L415.5 566.5M461.6 573.1L465.6 576.0M466.5 573.1L470.4 576.0M471.3 573.1L475.3 576.0M476.2 573.1L480.1 576.0M481.0 573.1L485.0 576.0M485.9 573.1L489.8 576.0M490.7 573.1L494.7 576.0M495.6 573.1L499.5 576.0M461.6 566.5L501.2 566.5M546.5 573.1L550.5 576.0M551.3 573.1L555.3 576.0M556.2 573.1L560.2 576.0M561.0 573.1L565.0 576.0M565.9 573.1L569.8 576.0M570.7 573.1L574.7 576.0M575.6 573.1L579.5 576.0M580.4 573.1L584.4 576.0M585.3 573.1L589.2 576.0M590.1 573.1L594.1 576.0M595.0 573.1L598.9 576.0M599.8 573.1L603.8 576.0M604.6 573.1L608.3 575.7M546.5 566.5L608.3 566.5M627.4 573.1L631.4 576.0M632.3 573.1L636.2 576.0M637.1 573.1L641.1 576.0M641.9 573.1L644.1 574.7M627.4 566.5L636.1 566.5M415.5 565.5H461.5V575.5H415.5ZM415.5 569.5L461.6 569.5M417.1 567.5L460.0 567.5M416.5 569.9L416.5 565.9M460.5 569.9L460.5 565.9M427.5 569.9L427.5 565.9M428.5 569.9L428.5 565.9M501.5 565.5H546.5V575.5H501.5ZM501.2 569.5L546.5 569.5M502.8 567.5L544.9 567.5M502.5 569.9L502.5 565.9M545.5 569.9L545.5 565.9M533.5 569.9L533.5 565.9M535.5 569.9L535.5 565.9M608.5 565.5H627.5V575.5H608.5ZM608.3 569.5L627.4 569.5M609.9 567.5L625.8 567.5M609.5 569.9L609.5 565.9M625.5 569.9L625.5 565.9M733.5 322.8L733.5 527.5M737.5 322.5L737.5 528.0M738.6 529.5L747.9 529.5M580.5 313.5H607.5V322.5H580.5ZM580.3 315.5L607.7 315.5M580.3 317.5L607.7 317.5M580.3 319.5L607.7 319.5M580.3 321.5L607.7 321.5M581.5 313.1L581.5 322.8M583.5 313.1L583.5 322.8M606.5 313.1L606.5 322.8M606.5 294.4L606.5 344.0M582.7 318.0L583.5 311.8L585.8 306.1L589.6 301.2L594.5 297.5L600.2 295.1L606.3 294.3M582.7 318.0L583.5 324.1L585.8 329.8L589.6 334.7L594.5 338.5L600.2 340.8L606.3 341.6M602.1 294.5L606.3 294.5M602.1 343.5L606.3 343.5M392.5 432.5H453.5V468.5H392.5ZM408.5 432.6L408.5 468.6M423.5 432.6L423.5 468.6M438.5 432.6L438.5 468.6M393.0 450.5L453.8 450.5M458.5 432.5H484.5V435.5H458.5ZM482.5 408.2L482.5 432.6M458.2 432.6L459.0 426.3L461.4 420.4L465.3 415.4L470.4 411.5L476.2 409.1L482.5 408.2M458.5 464.5H484.5V468.5H458.5ZM482.5 468.2L482.5 492.3M458.3 468.2L459.1 474.4L461.6 480.3L465.4 485.3L470.4 489.1L476.3 491.6L482.5 492.4M525.5 432.5H542.5V451.5H525.5ZM526.1 450.5L534.1 439.2L534.1 446.6L542.5 433.0M560.5 492.5H579.5V507.5H560.5ZM560.9 506.9L569.6 497.6L569.6 503.8L578.6 492.5M562.5 528.5H573.5V545.5H562.5ZM562.5 536.5L573.3 536.5M569.0 532.8L573.9 537.6M573.5 532.8L569.3 537.6M571.5 532.0L571.5 538.4M603.5 526.5H633.5V530.5H603.5ZM632.5 498.9L632.5 526.9M604.0 526.9L605.0 519.7L607.8 512.9L612.2 507.1L618.0 502.7L624.8 499.9L632.0 498.9M635.5 497.5H638.5V518.5H635.5ZM616.6 516.5L635.2 516.5M616.5 516.3L617.2 511.4L619.0 506.9L622.0 503.0L625.9 500.1L630.4 498.2L635.2 497.6M635.5 391.5H638.5V418.5H635.5ZM638.5 416.5L662.9 416.5M662.5 409.9L662.5 416.5M638.5 391.9L644.8 392.8L650.8 395.2L655.8 399.1L659.7 404.2L662.2 410.1L663.0 416.5M675.5 418.5H699.5V421.5H675.5ZM698.5 396.1L698.5 418.0M692.6 396.5L698.4 396.5M676.4 418.0L677.2 412.3L679.4 407.0L682.9 402.5L687.4 399.0L692.7 396.8L698.4 396.1M639.5 457.5H645.5V469.5H639.5ZM645.6 457.6L655.3 457.6L656.5 457.8L657.5 458.4L658.5 459.3L659.2 460.6L659.6 462.0L659.8 463.6L659.6 465.2L659.2 466.6L658.5 467.9L657.5 468.8L656.5 469.4L655.3 469.6L645.6 469.6M679.5 475.5H700.5V478.5H679.5ZM681.5 457.6L681.5 475.5M681.0 457.6L685.7 458.2L690.0 460.0L693.7 462.8L696.6 466.5L698.3 470.9L699.0 475.5M712.5 455.5H716.5V459.5H712.5ZM714.0 456.5L716.0 458.7M719.5 467.8L719.5 475.5M716.6 470.5L721.5 470.5M717.5 472.5L720.7 472.5M641.5 478.5H659.5V492.5H641.5ZM643.5 481.5H658.5V490.5H643.5ZM650.5 480.1L650.5 487.7M647.1 484.5L654.4 484.5M648.7 486.5L652.8 486.5M712.5 480.5H728.5V491.5H712.5ZM713.4 490.9L720.5 484.2L720.5 488.8L728.0 480.5M667.5 510.5H674.5V523.5H667.5ZM667.3 510.8L659.0 510.8L657.8 511.0L656.7 511.6L655.7 512.6L655.0 513.9L654.5 515.3L654.4 516.9L654.5 518.5L655.0 520.0L655.7 521.3L656.7 522.3L657.8 522.9L659.0 523.1L667.3 523.1M635.5 535.5H644.5V565.5H635.5ZM637.5 535.2L637.5 565.7M639.5 535.2L639.5 565.7M644.9 536.5L662.7 536.5M662.5 536.9L662.5 540.8M664.1 540.3L662.9 545.2L660.7 549.7L657.7 553.7L653.9 557.0L649.6 559.4L644.8 561.0M773.5 313.5H798.5V320.5H773.5ZM773.1 315.5L798.6 315.5M773.1 317.5L798.6 317.5M775.5 313.1L775.5 320.4M796.5 313.1L796.5 320.4M796.5 299.4L796.5 313.5M790.7 299.5L796.4 299.5M776.5 313.2L778.4 309.4L781.0 306.0L784.2 303.1L788.0 301.0L792.1 299.7L796.4 299.3M773.5 372.5H797.5V376.5H773.5ZM773.3 375.5L797.6 375.5M796.5 376.4L796.5 396.4M790.5 396.5L796.4 396.5M775.4 376.4L776.1 381.8L778.2 386.9L781.6 391.2L785.9 394.6L791.0 396.7L796.4 397.4M748.5 529.5H822.5V535.5H748.5ZM748.5 535.3L748.5 568.2M822.5 535.3L822.5 568.2M748.0 568.5L754.0 568.5M816.8 568.5L822.8 568.5M785.2 534.3L783.2 543.2L779.2 551.5L773.2 558.5L765.7 563.8L757.1 567.2L748.0 568.3M785.6 534.3L787.6 543.2L791.6 551.5L797.6 558.5L805.1 563.8L813.7 567.2L822.8 568.3M785.5 531.9L785.5 538.6M876.5 529.5H904.5V535.5H876.5ZM876.4 532.5L904.5 532.5M902.5 535.0L902.5 553.3M897.0 553.5L902.6 553.5M879.2 534.8L881.0 539.9L883.9 544.4L887.7 548.2L892.2 551.0L897.3 552.8L902.6 553.4" stroke="#000000" stroke-width="1" fill="none"/><path d="M641.0 565.9L641.0 573.1" stroke="#000000" stroke-width="2" fill="none"/></g><g text-rendering="geometricPrecision"><text x="675.1" y="310.8" font-size="6.46" fill="#000000" font-family="Liberation Sans, sans-serif" textLength="21.1" lengthAdjust="spacingAndGlyphs" stroke="#000000" stroke-width="0.18">I15x13</text><text x="609.0" y="582.1" font-size="6.46" fill="#000000" font-family="Liberation Sans, sans-serif" textLength="18.1" lengthAdjust="spacingAndGlyphs" stroke="#000000" stroke-width="0.18">I6x13</text><text x="584.7" y="293.1" font-size="6.46" fill="#000000" font-family="Liberation Sans, sans-serif" textLength="18.2" lengthAdjust="spacingAndGlyphs" stroke="#000000" stroke-width="0.18">U09V</text><text x="584.7" y="349.5" font-size="6.46" fill="#000000" font-family="Liberation Sans, sans-serif" textLength="18.2" lengthAdjust="spacingAndGlyphs" stroke="#000000" stroke-width="0.18">U09V</text><path d="M560.1 526.5L579.0 526.5" stroke="#ff0000" stroke-width="1" stroke-dasharray="4 2" fill="none"/><path d="M501.5 547.5L501.5 565.9" stroke="#ff0000" stroke-width="1" stroke-dasharray="6 3" fill="none"/><path d="M546.5 547.5L546.5 565.9" stroke="#ff0000" stroke-width="1" stroke-dasharray="6 3" fill="none"/><text x="609.9" y="499.8" font-size="6.46" fill="#000000" font-family="Liberation Sans, sans-serif" textLength="16.6" lengthAdjust="spacingAndGlyphs" stroke="#000000" stroke-width="0.18">010V</text><text x="613.0" y="516.2" transform="rotate(-62 613.0 516.2)" font-size="6.46" fill="#000000" font-family="Liberation Sans, sans-serif" textLength="13.6" lengthAdjust="spacingAndGlyphs" stroke="#000000" stroke-width="0.18">060</text><text x="662.6" y="397.7" transform="rotate(90 662.6 397.7)" font-size="6.46" fill="#000000" font-family="Liberation Sans, sans-serif" textLength="13.6" lengthAdjust="spacingAndGlyphs" stroke="#000000" stroke-width="0.18">09V</text><text x="680.9" y="396.4" font-size="6.46" fill="#000000" font-family="Liberation Sans, sans-serif" textLength="13.6" lengthAdjust="spacingAndGlyphs" stroke="#000000" stroke-width="0.18">08V</text><text x="683.4" y="457.7" font-size="6.46" fill="#000000" font-family="Liberation Sans, sans-serif" textLength="13.6" lengthAdjust="spacingAndGlyphs" stroke="#000000" stroke-width="0.18">070</text><text x="668.4" y="561.7" transform="rotate(-90 668.4 561.7)" font-size="6.46" fill="#000000" font-family="Liberation Sans, sans-serif" textLength="21.2" lengthAdjust="spacingAndGlyphs" stroke="#000000" stroke-width="0.18">U010B</text><text x="776.8" y="297.6" font-size="6.46" fill="#000000" font-family="Liberation Sans, sans-serif" textLength="18.2" lengthAdjust="spacingAndGlyphs" stroke="#000000" stroke-width="0.18">U09V</text><text x="779.0" y="401.5" font-size="6.46" fill="#000000" font-family="Liberation Sans, sans-serif" textLength="13.6" lengthAdjust="spacingAndGlyphs" stroke="#000000" stroke-width="0.18">060</text><text x="778.8" y="573.6" font-size="6.46" fill="#000000" font-family="Liberation Sans, sans-serif" textLength="13.6" lengthAdjust="spacingAndGlyphs" stroke="#000000" stroke-width="0.18">025</text><text x="883.0" y="559.6" font-size="6.46" fill="#000000" font-family="Liberation Sans, sans-serif" textLength="18.2" lengthAdjust="spacingAndGlyphs" stroke="#000000" stroke-width="0.18">U090</text><text x="660.1" y="597.4" font-size="3.71" fill="#000000" font-family="Liberation Sans, sans-serif" textLength="20.2" lengthAdjust="spacingAndGlyphs" font-weight="bold" stroke="#000000" stroke-width="0.45">KAUP.OSA/KYLÄ</text><text x="702.7" y="597.4" font-size="3.71" fill="#000000" font-family="Liberation Sans, sans-serif" textLength="24.2" lengthAdjust="spacingAndGlyphs" font-weight="bold" stroke="#000000" stroke-width="0.45">KORTTELI/TILA</text><text x="748.8" y="597.4" font-size="3.71" fill="#000000" font-family="Liberation Sans, sans-serif" textLength="21.0" lengthAdjust="spacingAndGlyphs" font-weight="bold" stroke="#000000" stroke-width="0.45">TONTTI/RNO</text><text x="799.0" y="597.4" font-size="3.71" fill="#000000" font-family="Liberation Sans, sans-serif" textLength="75.1" lengthAdjust="spacingAndGlyphs" font-weight="bold" stroke="#000000" stroke-width="0.45">VIRANOMAISTEN ARKISTOMERKINTÖJÄ VARTEN</text><text x="660.1" y="610.4" font-size="3.71" fill="#000000" font-family="Liberation Sans, sans-serif" textLength="35.5" lengthAdjust="spacingAndGlyphs" font-weight="bold" stroke="#000000" stroke-width="0.45">RAKENNUSTOIMENPIDE</text><text x="799.0" y="610.4" font-size="3.71" fill="#000000" font-family="Liberation Sans, sans-serif" textLength="22.6" lengthAdjust="spacingAndGlyphs" font-weight="bold" stroke="#000000" stroke-width="0.45">PIIRUSTUSLAJI</text><text x="913.0" y="610.4" font-size="3.71" fill="#000000" font-family="Liberation Sans, sans-serif" textLength="20.2" lengthAdjust="spacingAndGlyphs" font-weight="bold" stroke="#000000" stroke-width="0.45">JUOKS. NRO</text><text x="660.1" y="623.4" font-size="3.71" fill="#000000" font-family="Liberation Sans, sans-serif" textLength="58.9" lengthAdjust="spacingAndGlyphs" font-weight="bold" stroke="#000000" stroke-width="0.45">RAKENNUSKOHTEEN NIMI JA OSOITE</text><text x="799.0" y="623.4" font-size="3.71" fill="#000000" font-family="Liberation Sans, sans-serif" textLength="38.0" lengthAdjust="spacingAndGlyphs" font-weight="bold" stroke="#000000" stroke-width="0.45">PIIRUSTUKSEN SISÄLTÖ</text><text x="913.0" y="623.4" font-size="3.71" fill="#000000" font-family="Liberation Sans, sans-serif" textLength="22.6" lengthAdjust="spacingAndGlyphs" font-weight="bold" stroke="#000000" stroke-width="0.45">MITTAKAAVAT</text><text x="753.7" y="662.1" font-size="3.71" fill="#000000" font-family="Liberation Sans, sans-serif" textLength="12.1" lengthAdjust="spacingAndGlyphs" font-weight="bold" stroke="#000000" stroke-width="0.45">SUUNN.</text><text x="776.2" y="662.1" font-size="3.71" fill="#000000" font-family="Liberation Sans, sans-serif" textLength="8.9" lengthAdjust="spacingAndGlyphs" font-weight="bold" stroke="#000000" stroke-width="0.45">PIIRT.</text><text x="798.9" y="662.1" font-size="3.71" fill="#000000" font-family="Liberation Sans, sans-serif" textLength="100.1" lengthAdjust="spacingAndGlyphs" font-weight="bold" stroke="#000000" stroke-width="0.45">SUUNNITTELUALA, TYÖN NUMERO JA PIIRUSTUKSEN NUMERO</text><text x="917.5" y="662.1" font-size="3.71" fill="#000000" font-family="Liberation Sans, sans-serif" textLength="12.9" lengthAdjust="spacingAndGlyphs" font-weight="bold" stroke="#000000" stroke-width="0.45">MUUTOS</text><text x="753.7" y="671.0" font-size="3.71" fill="#000000" font-family="Liberation Sans, sans-serif" textLength="13.7" lengthAdjust="spacingAndGlyphs" font-weight="bold" stroke="#000000" stroke-width="0.45">YHTEYSH.</text><text x="776.2" y="671.0" font-size="3.71" fill="#000000" font-family="Liberation Sans, sans-serif" textLength="9.7" lengthAdjust="spacingAndGlyphs" font-weight="bold" stroke="#000000" stroke-width="0.45">TARK.</text><text x="753.7" y="679.7" font-size="3.71" fill="#000000" font-family="Liberation Sans, sans-serif" textLength="7.7" lengthAdjust="spacingAndGlyphs" font-weight="bold" stroke="#000000" stroke-width="0.45">PVM.</text><text x="753.7" y="688.0" font-size="3.71" fill="#000000" font-family="Liberation Sans, sans-serif" textLength="15.3" lengthAdjust="spacingAndGlyphs" font-weight="bold" stroke="#000000" stroke-width="0.45">ALLEKIRJ.</text><text x="883.2" y="688.0" font-size="3.71" fill="#000000" font-family="Liberation Sans, sans-serif" textLength="22.6" lengthAdjust="spacingAndGlyphs" font-weight="bold" stroke="#000000" stroke-width="0.45">TILAAJAN NRO</text><text x="914.5" y="631.9" font-size="8.07" fill="#ff0000" font-family="Liberation Sans, sans-serif" textLength="18.0" lengthAdjust="spacingAndGlyphs" stroke="#ff0000" stroke-width="0.1">1:50</text><text x="802.2 811.7 821.5" y="680.3" font-size="15.02" fill="#00ff00" font-family="DejaVu Sans Light, sans-serif" stroke="#00ff00" stroke-width="0.25">LVI</text></g></svg><div class="pill" style="left:820.3px;top:25.19999999999999px"></div><div class="topbox" style="left:838.0999999999999px;top:99.19999999999999px"></div><span class="t" style="left:853.14px;top:120.88px;font-size:16.8px;line-height:21px;color:#858585;transform:scaleX(1.1055);">Top</span><svg width="98" height="35" viewBox="0 0 98 35" style="left:820.3px;top:25.19999999999999px"><path d="M32.9 4.8v24.8M63.9 4.8v24.8" stroke="#c2c2c2" stroke-width="1" fill="none"/><path d="M14.6 14.1C11.600 15.200 9.300 17.200 8 19.600c2 3.600 5.400 5.600 9.400 5.600s7.200-1.900 9-5.200c-.3-.7-.7-1.300-1.100-1.900" fill="none" stroke="#787878" stroke-width="1.3" stroke-linecap="round"/><path d="M20.200 19.700a3.200 3.200 0 1 1-3.600-3.700" fill="none" stroke="#787878" stroke-width="1.3" stroke-linecap="round"/><path d="M21.40 12.10L21.40 8.25M21.40 12.10L18.07 10.18M21.40 12.10L18.07 14.03M21.40 12.10L21.40 15.95M21.40 12.10L24.73 14.03M21.40 12.10L24.73 10.17" stroke="#787878" stroke-width="2.3" stroke-linecap="round" fill="none"/><circle cx="21.4" cy="12.1" r="3.3" fill="#787878"/><circle cx="21.4" cy="12.1" r="1.5" fill="#dcdcdc"/><path d="M40.8 14.800h9.300v9.500h-9.300zM40.8 14.800l4.200-3.700h6.600M50.1 14.800l5-6.500v13.800l-5 4.400z" fill="none" stroke="#787878" stroke-width="1.3" stroke-linejoin="round"/><circle cx="75.6" cy="17.2" r="1.05" fill="#787878"/><circle cx="80.6" cy="17.2" r="1.05" fill="#787878"/><circle cx="85.6" cy="17.2" r="1.05" fill="#787878"/></svg><div class="a" style="left:348px;top:607.4px;width:250px;height:30px;background:#eaeaea;border-radius:4px 4px 0 0"></div><span class="t" style="left:401.62px;top:612.10px;font-size:15.0px;line-height:19px;color:#404040;transform:scaleX(0.9605);">38167.665, -1855.951</span></div><div class="a" style="left:944px;top:39px;width:1px;height:636px;background:#000"></div><div class="a" style="left:0;top:674px;width:945px;height:1px;background:#000"></div></div></div></body></html>
